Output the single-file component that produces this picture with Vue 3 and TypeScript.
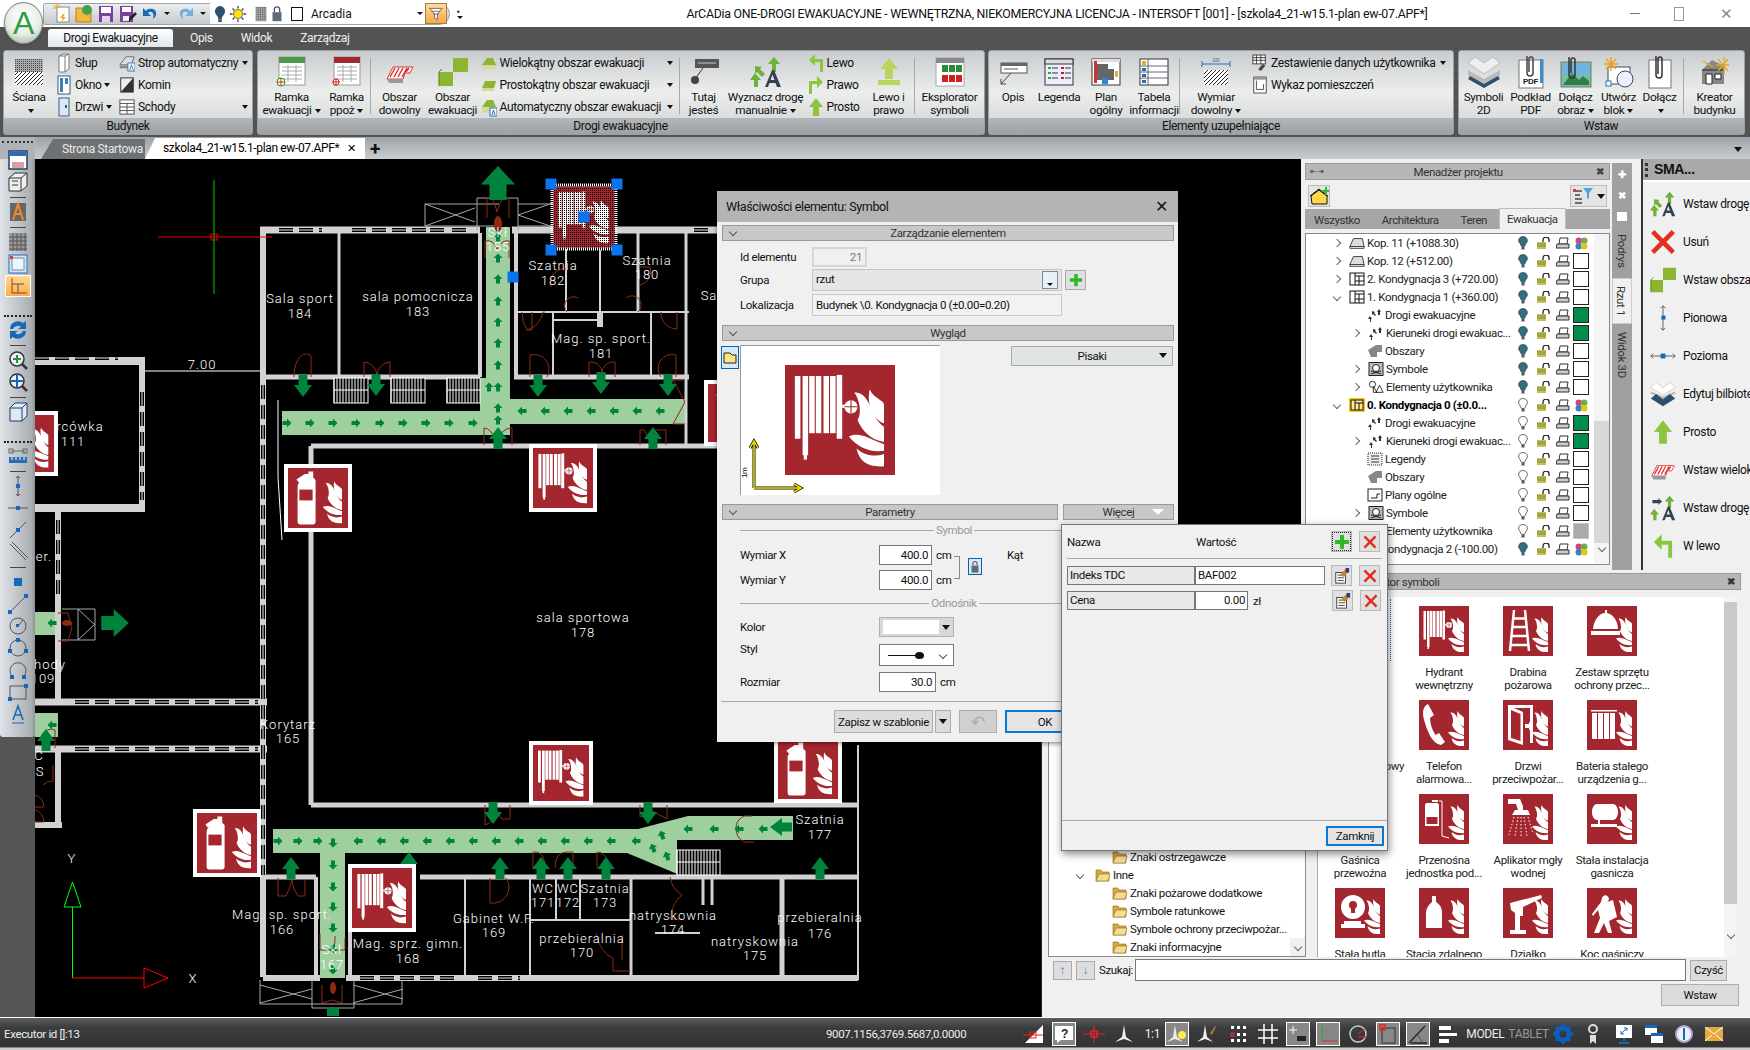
<script setup lang="ts">
interface Big { kind: 'big'; w: number; l1: string; l2?: string; dd?: boolean; icon: string; iw?: number; ih?: number }
interface Sep { kind: 'sep' }
interface Small { icon: string; text: string; dd?: boolean }
interface Col { kind: 'col'; w: number; gapEnd?: boolean; items: Small[] }
type Item = Big | Sep | Col
interface Panel { title: string; w: number; items: Item[] }

const panels: Panel[] = [
  { title: 'Budynek', w: 250, items: [
    { kind: 'big', w: 50, l1: 'Ściana', l2: '', dd: true, icon: 'wall', iw: 28, ih: 26 },
    { kind: 'col', w: 63, items: [
      { icon: 'post', text: 'Słup' }, { icon: 'window', text: 'Okno', dd: true }, { icon: 'door', text: 'Drzwi', dd: true } ] },
    { kind: 'col', w: 135, items: [
      { icon: 'slab', text: 'Strop automatyczny', dd: true }, { icon: 'chimney', text: 'Komin' }, { icon: 'stairs', text: 'Schody', dd: true } ] }
  ] },
  { title: 'Drogi ewakuacyjne', w: 728, items: [
    { kind: 'big', w: 68, l1: 'Ramka', l2: 'ewakuacji', dd: true, icon: 'frameEv', iw: 32, ih: 32 },
    { kind: 'big', w: 42, l1: 'Ramka', l2: 'ppoż', dd: true, icon: 'frameFi', iw: 32, ih: 32 },
    { kind: 'sep' },
    { kind: 'big', w: 54, l1: 'Obszar', l2: 'dowolny', icon: 'areaFree', iw: 30, ih: 30 },
    { kind: 'big', w: 52, l1: 'Obszar', l2: 'ewakuacji', icon: 'areaEv', iw: 30, ih: 30 },
    { kind: 'col', w: 198, items: [
      { icon: 'polyA', text: 'Wielokątny obszar ewakuacji', dd: true },
      { icon: 'rectA', text: 'Prostokątny obszar ewakuacji', dd: true },
      { icon: 'autoA', text: 'Automatyczny obszar ewakuacji', dd: true } ] },
    { kind: 'sep' },
    { kind: 'big', w: 44, l1: 'Tutaj', l2: 'jesteś', icon: 'here', iw: 30, ih: 30 },
    { kind: 'big', w: 80, l1: 'Wyznacz drogę', l2: 'manualnie', dd: true, icon: 'route', iw: 32, ih: 32 },
    { kind: 'col', w: 60, items: [
      { icon: 'left', text: 'Lewo' }, { icon: 'right', text: 'Prawo' }, { icon: 'straight', text: 'Prosto' } ] },
    { kind: 'big', w: 46, l1: 'Lewo i', l2: 'prawo', icon: 'both', iw: 28, ih: 30 },
    { kind: 'sep' },
    { kind: 'big', w: 66, l1: 'Eksplorator', l2: 'symboli', icon: 'explorer', iw: 32, ih: 32 }
  ] },
  { title: 'Elementy uzupełniające', w: 466, items: [
    { kind: 'big', w: 48, l1: 'Opis', l2: '', icon: 'note', iw: 30, ih: 30 },
    { kind: 'big', w: 44, l1: 'Legenda', l2: '', icon: 'legend', iw: 30, ih: 30 },
    { kind: 'big', w: 50, l1: 'Plan', l2: 'ogólny', icon: 'plan', iw: 30, ih: 30 },
    { kind: 'big', w: 46, l1: 'Tabela', l2: 'informacji', icon: 'tableI', iw: 30, ih: 30 },
    { kind: 'sep' },
    { kind: 'big', w: 68, l1: 'Wymiar', l2: 'dowolny', dd: true, icon: 'dim', iw: 30, ih: 30 },
    { kind: 'col', w: 200, items: [
      { icon: 'summary', text: 'Zestawienie danych użytkownika', dd: true }, { icon: 'rooms', text: 'Wykaz pomieszczeń' } ] }
  ] },
  { title: 'Wstaw', w: 287, items: [
    { kind: 'big', w: 50, l1: 'Symboli', l2: '2D', icon: 'sym2d', iw: 34, ih: 32 },
    { kind: 'big', w: 44, l1: 'Podkład', l2: 'PDF', icon: 'pdf', iw: 26, ih: 34 },
    { kind: 'big', w: 46, l1: 'Dołącz', l2: 'obraz', dd: true, icon: 'image', iw: 32, ih: 32 },
    { kind: 'big', w: 40, l1: 'Utwórz', l2: 'blok', dd: true, icon: 'block', iw: 34, ih: 34 },
    { kind: 'big', w: 42, l1: 'Dołącz', l2: '', dd: true, icon: 'attach', iw: 26, ih: 34 },
    { kind: 'sep' },
    { kind: 'big', w: 58, l1: 'Kreator', l2: 'budynku', icon: 'wizard', iw: 30, ih: 32 }
  ] }
]

const qatLeft = ['qNew', 'qOpen', 'qSave', 'qSaveAs']

const leftTools: { icon?: string; kind?: string }[] = [
  { icon: 'tWin' }, { icon: 'tBox' }, { kind: 'line' }, { icon: 'tA' }, { kind: 'line' }, { icon: 'tGrid' }, { icon: 'tFrame' }, { icon: 'tOrtho', kind: 'on' },
  { kind: 'grip' }, { icon: 'tSwap' }, { kind: 'line' }, { icon: 'tZoom' }, { icon: 'tZoomB' }, { kind: 'line' }, { icon: 'tCube' },
  { kind: 'grip' }, { icon: 'tRuler' }, { kind: 'line' }, { icon: 'tVert' }, { icon: 'tHoriz' }, { icon: 'tDiag' }, { icon: 'tDiag2' }, { kind: 'line' },
  { icon: 'tDot' }, { icon: 'tSeg' }, { icon: 'tCirc' }, { icon: 'tCirc2' }, { icon: 'tCirc3' }, { icon: 'tRect' }, { icon: 'tText' }
]

interface Row { chev?: 'r' | 'd'; lvl: number; icon: string; text: string; bold?: boolean; on: boolean; box: 'multi' | 'white' | 'green' | 'grey' }
const tree: Row[] = [
  { chev: 'r', lvl: 0, icon: 'nSlab', text: 'Kop. 11 (+1088.30)', on: false, box: 'multi' },
  { chev: 'r', lvl: 0, icon: 'nSlab', text: 'Kop. 12 (+512.00)', on: false, box: 'white' },
  { chev: 'r', lvl: 0, icon: 'nFloor', text: '2. Kondygnacja 3 (+720.00)', on: false, box: 'white' },
  { chev: 'd', lvl: 0, icon: 'nFloor', text: '1. Kondygnacja 1 (+360.00)', on: false, box: 'white' },
  { lvl: 1, icon: 'nRoute', text: 'Drogi ewakuacyjne', on: false, box: 'green' },
  { chev: 'r', lvl: 1, icon: 'nRoute', text: 'Kieruneki drogi ewakuac...', on: false, box: 'green' },
  { lvl: 1, icon: 'nArea', text: 'Obszary', on: false, box: 'white' },
  { chev: 'r', lvl: 1, icon: 'nSym', text: 'Symbole', on: false, box: 'white' },
  { chev: 'r', lvl: 1, icon: 'nUser', text: 'Elementy użytkownika', on: false, box: 'white' },
  { chev: 'd', lvl: 0, icon: 'nCur', text: '0. Kondygnacja 0 (±0.0...', bold: true, on: true, box: 'multi' },
  { lvl: 1, icon: 'nRoute', text: 'Drogi ewakuacyjne', on: true, box: 'green' },
  { chev: 'r', lvl: 1, icon: 'nRoute', text: 'Kieruneki drogi ewakuac...', on: true, box: 'green' },
  { lvl: 1, icon: 'nLeg', text: 'Legendy', on: true, box: 'white' },
  { lvl: 1, icon: 'nArea', text: 'Obszary', on: true, box: 'white' },
  { lvl: 1, icon: 'nPlan', text: 'Plany ogólne', on: true, box: 'white' },
  { chev: 'r', lvl: 1, icon: 'nSym', text: 'Symbole', on: true, box: 'white' },
  { chev: 'r', lvl: 1, icon: 'nUser', text: 'Elementy użytkownika', on: true, box: 'grey' },
  { chev: 'r', lvl: 0, icon: 'nFloor', text: '-1. Kondygnacja 2 (-100.00)', on: false, box: 'multi' }
]

const smaItems = [
  { icon: 'route', text: 'Wstaw drogę' }, { icon: 'xRed', text: 'Usuń' }, { icon: 'areaEv', text: 'Wstaw obszar' },
  { icon: 'pionowa', text: 'Pionowa' }, { icon: 'pozioma', text: 'Pozioma' }, { icon: 'sym2dB', text: 'Edytuj bilbiotekę' },
  { icon: 'straight', text: 'Prosto' }, { icon: 'areaFree', text: 'Wstaw wielokątny' }, { icon: 'route2', text: 'Wstaw drogę' }, { icon: 'left', text: 'W lewo' }
]

const explorerTree = [
  { lvl: 1, text: 'Znaki ostrzegawcze' }, { lvl: 0, text: 'Inne' }, { lvl: 1, text: 'Znaki pożarowe dodatkowe' },
  { lvl: 1, text: 'Symbole ratunkowe' }, { lvl: 1, text: 'Symbole ochrony przeciwpożar...' }, { lvl: 1, text: 'Znaki informacyjne' }
]

const grid = [
  { icon: '', l1: '', l2: '' }, { icon: 'sHose', l1: 'Hydrant', l2: 'wewnętrzny' }, { icon: 'sLadder', l1: 'Drabina', l2: 'pożarowa' }, { icon: 'sBell', l1: 'Zestaw sprzętu', l2: 'ochrony przec...' },
  { icon: '', l1: 'Zawór hydrantowy', l2: '' }, { icon: 'sPhone', l1: 'Telefon', l2: 'alarmowa...' }, { icon: 'sDoor', l1: 'Drzwi', l2: 'przeciwpożar...' }, { icon: 'sBattery', l1: 'Bateria stałego', l2: 'urządzenia g...' },
  { icon: '', l1: 'Gaśnica', l2: 'przewoźna', hidden: true }, { icon: 'sMobile', l1: 'Przenośna', l2: 'jednostka pod...' }, { icon: 'sMist', l1: 'Aplikator mgły', l2: 'wodnej' }, { icon: 'sTank', l1: 'Stała instalacja', l2: 'gasnicza' },
  { icon: 'sDrum', l1: 'Stała butla', l2: '' }, { icon: 'sBottle', l1: 'Stacja zdalnego', l2: '' }, { icon: 'sCannon', l1: 'Działko', l2: '' }, { icon: 'sBlanket', l1: 'Koc gaśniczy', l2: '' }
]

const statusIcons = [
  { icon: 'st1' }, { icon: 'st2', on: true }, { icon: 'st3' }, { icon: 'st4' }, { text: '1:1' }, { icon: 'st5', on: true }, { icon: 'st6' },
  { icon: 'st7' }, { icon: 'st8' }, { icon: 'st9', on: true }, { icon: 'st10', on: true }, { icon: 'st11' }, { icon: 'st12', on: true }, { icon: 'st13', on: true }, { icon: 'st14' }
]
const statusEnd = ['st15', 'st16', 'st17', 'st18', 'st19', 'st20']

// ---- drawing data (page coordinates; the svg viewBox matches them) ----
const corridors = [
  '486,227 510,227 510,399 686,399 686,424 510,424 510,435 282,435 282,411 480,411 480,378 486,378',
  '273,829 638,829 688,816 793,816 793,840 677,840 677,873 675,873 627,853 345,853 345,978 320,978 320,853 273,853',
  '35,612 58,612 58,635 35,635', '35,713 58,713 58,737 35,737'
]
const walls: number[][] = [
  [260, 230, 480, 230, 7], [512, 230, 717, 230, 7], [263, 230, 263, 977, 6], [339, 233, 339, 377, 3], [480, 233, 480, 377, 4], [516, 233, 516, 377, 4],
  [263, 377, 480, 377, 5], [514, 377, 689, 377, 5], [35, 361, 145, 361, 8], [142, 358, 142, 508, 6], [35, 508, 145, 508, 8], [58, 508, 58, 702, 6],
  [35, 702, 267, 702, 7], [35, 749, 267, 749, 7], [58, 749, 58, 825, 6], [35, 825, 62, 825, 6], [311, 446, 717, 446, 5], [311, 446, 311, 805, 5],
  [311, 805, 858, 805, 5], [858, 745, 858, 980, 2], [263, 877, 316, 877, 5], [420, 877, 858, 877, 5], [263, 978, 320, 978, 6], [346, 978, 858, 978, 6],
  [316, 877, 316, 978, 4], [350, 932, 350, 978, 4], [465, 877, 465, 978, 2], [530, 877, 530, 978, 2], [556, 877, 556, 920, 2], [580, 877, 580, 920, 2], [631, 877, 631, 978, 3],
  [530, 920, 631, 920, 2], [655, 933, 700, 933, 2], [782, 877, 782, 980, 5], [703, 877, 703, 905, 3], [712, 877, 712, 905, 3], [553, 320, 598, 320, 2], [566, 233, 566, 312, 2],
  [600, 250, 600, 312, 2], [638, 233, 638, 312, 3], [516, 312, 566, 312, 2], [566, 312, 638, 312, 2], [638, 312, 689, 312, 2], [553, 312, 553, 377, 2], [651, 312, 651, 377, 2],
  [686, 233, 686, 446, 3], [600, 312, 600, 327, 6]
]
const windows: number[][] = [
  [279, 230, 322, 230], [352, 230, 372, 230], [372, 230, 392, 230], [392, 230, 410, 230], [412, 230, 428, 230], [430, 230, 448, 230], [452, 230, 466, 230], [694, 230, 712, 230],
  [35, 358, 118, 358], [142, 392, 142, 500], [263, 385, 263, 875], [58, 520, 58, 600], [75, 702, 258, 702], [75, 749, 258, 749], [360, 978, 455, 978], [478, 978, 520, 978]
]
const stairs = [
  { x: 334, y: 378, w: 34 }, { x: 391, y: 378, w: 34 }, { x: 447, y: 378, w: 33 }, { x: 677, y: 850, w: 43 }
]
const doors = [
  'M311 356 a12 22 0 0 0 -17 21', 'M311 356 v21', 'M364 362 v15 M364 362 a14 14 0 0 1 13 15 M390 362 v15 M390 362 a14 14 0 0 0 -13 15',
  'M487 218 v-20 q6 -5 10 14 q5 -19 12 -14 v20', 'M485 258 v-17 q8 -2 12 8 q6 -10 12 -8 v17', 'M530 355 v22 M530 355 a15 15 0 0 1 17 22 M589 362 v15 M589 362 a12 12 0 0 1 13 15 M615 362 v15 M615 362 a12 12 0 0 0 -13 15 M676 355 v22 M676 355 a14 14 0 0 0 -15 22',
  'M532 312 v18 h-5 q-5 -8 -5 -18 M545 312 h-2 q-3 14 -16 18', 'M551 287 a14 14 0 0 1 15 -18', 'M640 285 a14 14 0 0 0 10 -18 h-10', 'M567 312 a9 9 0 0 1 11 -14 M638 312 a9 9 0 0 0 -12 -14',
  'M677 312 v17 a16 16 0 0 1 -16 -17', 'M484 445 v-17 q8 0 12 15 q5 -15 16 -15 v17', 'M640 445 v-15 h4 q2 2 6 13 q4 -11 6 -13 h10 v15', 'M673 380 h12 M673 424 h12 M673 380 l12 22 l-12 22',
  'M58 613 h10 q2 8 4 14 q-2 8 -4 14 h-10', 'M55 730 v18 M55 730 a8 8 0 0 0 -8 18', 'M53 765 v16 q-6 0 -10 4', 'M35 795 q8 2 9 12 h-9 M35 810 q8 2 9 12 h-9',
  'M485 805 v20 q8 -2 10 -12 M510 805 v14 h-8 q-4 -4 -8 -14', 'M640 805 v12 q6 -1 8 -8 M667 805 v14 q-8 -4 -18 -10',
  'M278 878 v18 l8 0 q4 -8 6 -16 q1 10 6 16 h7 v-16', 'M490 878 v25 a16 16 0 0 0 16 -25', 'M533 868 v-16 M533 852 q12 -2 12 16 M555 868 q0 -16 12 -16 h6 v16', 'M597 868 v-16 q10 0 12 16',
  'M596 933 q4 20 17 25 v3 M613 961 v10 h17 M622 935 v25', 'M670 877 q2 12 12 18 q-10 8 -12 24 h12', 'M320 950 v-16 M320 950 h12 q4 -6 3 -14 M345 950 v-12 M345 950 h-12', 'M322 985 v18 l10 -3 l10 3 v-18',
  'M744 842 q-8 -4 -8 -14 q0 -8 8 -12 h8 M744 842 h10'
]
const exitsGrey = [
  'M425 204 h74 M425 204 v22 h74 M425 204 l50 18 M425 226 l50 -18', 'M477 198 h41 v32 M477 198 v32 M518 204 h35 M518 226 h35 M518 215 l35 -12 M518 215 l35 12',
  'M62 609 h33 v31 h-33 M78 609 v31 M78 609 l17 16 M78 640 l17 -16', 'M260 980 v24 h142 v-24 M260 985 l52 14 M260 1003 l52 -14 M353 985 l50 14 M353 1003 l50 -14', 'M312 980 v28 h42 v-28'
]
const small = [
  ...[237, 258, 279, 301, 322, 343, 365, 387, 408, 420].map((y) => ({ x: 498, y, r: 0 })),
  ...[287, 310, 333, 356, 380, 403, 426, 449, 473].map((x) => ({ x, y: 423, r: 90 })),
  ...[522, 545, 568, 591, 614, 637, 660].map((x) => ({ x, y: 411, r: -90 })),
  ...[278, 298, 318].map((x) => ({ x, y: 841, r: 90 })),
  ...[358, 381, 404, 427, 450, 473, 496, 519, 542, 565, 588, 611, 636, 688, 714, 739, 763].map((x) => ({ x, y: x > 680 ? 829 : 841, r: -90 })),
  ...[843, 865, 887, 907, 928, 949, 970].map((y) => ({ x: 333, y, r: 180 })),
  { x: 662, y: 835, r: -20 }, { x: 653, y: 848, r: -20 }, { x: 667, y: 856, r: -20 }, { x: 52, y: 623, r: -90 }, { x: 52, y: 725, r: -90 }, { x: 489, y: 387, r: 0 }
]
const large = [
  { x: 303, y: 386, r: 180 }, { x: 376, y: 385, r: 180 }, { x: 538, y: 386, r: 180 }, { x: 601, y: 383, r: 180 }, { x: 668, y: 385, r: 180 },
  { x: 498, y: 438, r: 0 }, { x: 653, y: 438, r: 0 }, { x: 493, y: 813, r: 180 }, { x: 648, y: 813, r: 180 }, { x: 291, y: 868, r: 0 }, { x: 409, y: 863, r: 0 },
  { x: 500, y: 868, r: 0 }, { x: 541, y: 868, r: 0 }, { x: 568, y: 868, r: 0 }, { x: 606, y: 868, r: 0 }, { x: 46, y: 740, r: 0 }, { x: 781, y: 827, r: -90 }, { x: 820, y: 868, r: 0 }
]
const signs = [
  { id: 'sExt', x: 284, y: 464, s: 68 }, { id: 'sHose', x: 529, y: 444, s: 68 }, { id: 'sExt', x: -7, y: 411, s: 65 }, { id: 'sExt', x: 704, y: 380, s: 66 },
  { id: 'sHose', x: 529, y: 741, s: 64 }, { id: 'sExt', x: 193, y: 809, s: 68 }, { id: 'sHose', x: 348, y: 864, s: 68 }, { id: 'sExt', x: 774, y: 735, s: 68 }
]
const labels: [string, number, number][] = [
  ['7.00', 202, 369], ['Sala sport', 300, 303], ['184', 300, 318], ['sala pomocnicza', 418, 301], ['183', 418, 316], ['Skł', 498, 237], ['185', 498, 251],
  ['Szatnia', 553, 270], ['182', 553, 285], ['Szatnia', 647, 265], ['180', 647, 279], ['Sa', 709, 300], ['Mag. sp. sport.', 601, 343], ['181', 601, 358],
  ['rcówka', 80, 431], ['111', 73, 446], ['er.', 44, 561], ['hody', 50, 669], ['109', 43, 683], ['Korytarz', 288, 729], ['165', 288, 743], ['C', 39, 760], ['S', 40, 776],
  ['sala sportowa', 583, 622], ['178', 583, 637], ['Mag. sp. sport.', 282, 919], ['166', 282, 934], ['Mag. sprz. gimn.', 408, 948], ['168', 408, 963], ['Gabinet W.F.', 494, 923], ['169', 494, 937],
  ['WC', 543, 893], ['171', 543, 907], ['WC', 568, 893], ['172', 568, 907], ['Szatnia', 605, 893], ['173', 605, 907], ['przebieralnia', 582, 943], ['170', 582, 957],
  ['natryskownia', 673, 920], ['174', 673, 934], ['Szatnia', 820, 824], ['177', 820, 839], ['przebieralnia', 820, 922], ['176', 820, 938], ['natryskownia', 755, 946], ['175', 755, 960],
  ['Skł', 332, 954], ['167', 332, 969], ['X', 193, 983], ['Y', 72, 863]
]
const handles = [[551, 184], [617, 184], [551, 250], [617, 250], [584, 217], [513, 277]]
</script>

<template>
  <div class="app">
    <svg class="defs" width="0" height="0" aria-hidden="true">
      <defs>
        <pattern id="dith" width="2" height="2" patternUnits="userSpaceOnUse"><rect width="1" height="1" fill="#000" /></pattern>
        <pattern id="hatch" width="4" height="4" patternUnits="userSpaceOnUse"><path d="M0 4L4 0" stroke="#222" stroke-width="1" /></pattern>
        <pattern id="stip" width="2" height="2" patternUnits="userSpaceOnUse"><rect width="2" height="2" fill="#aaa" /><rect width="1" height="1" fill="#444" /></pattern>
        <g id="flames" fill="#fff">
          <path d="M77 22C80 30 90 32 90 36V53C80 50 74 36 77 22Z" />
          <path d="M63 25C72 24 76 34 80 42C82 50 88 55 90 56V70C78 68 70 60 66 50C70 44 68 32 63 25Z" />
          <path d="M58 65C68 60 78 68 90 72V78C78 80 66 75 58 65Z" />
          <path d="M65 76C72 82 80 84 90 81V92C78 93 68 90 65 76Z" />
        </g>
      </defs>
      <symbol id="sHose" viewBox="0 0 100 100"><rect width="100" height="100" fill="#a4262f" /><use href="#flames" /><g fill="#fff"><rect x="9" y="10" width="5" height="57" /><rect x="16" y="10" width="5" height="72" /><rect x="22" y="10" width="5" height="52" /><rect x="28" y="10" width="5" height="52" /><rect x="35" y="10" width="5" height="52" /><rect x="41" y="10" width="5" height="52" /><rect x="47" y="9" width="5" height="58" /><rect x="17" y="78" width="3" height="8" /><rect x="52" y="36" width="6" height="3" /></g><circle cx="60" cy="38" r="6" fill="#fff" /><path d="M54 38h12M60 32v12" stroke="#a4262f" /></symbol>
      <symbol id="sExt" viewBox="0 0 100 100"><rect width="100" height="100" fill="#a4262f" /><use href="#flames" /><path fill="#fff" d="M14 19l14-9h6v-4h8v10l4 4v70a4 4 0 0 1-4 4H20a4 4 0 0 1-4-4V32a10 10 0 0 1 7-10l-5 2z" /><rect x="19" y="36" width="22" height="18" fill="#a4262f" /></symbol>
      <symbol id="sLadder" viewBox="0 0 100 100"><rect width="100" height="100" fill="#a4262f" /><use href="#flames" /><path stroke="#fff" stroke-width="5" fill="none" d="M22 8L14 90M44 8L52 90M18 25H48M17 42H48M15 60H50M14 78H52" /></symbol>
      <symbol id="sBell" viewBox="0 0 100 100"><rect width="100" height="100" fill="#a4262f" /><use href="#flames" /><path fill="#fff" d="M12 46C14 26 26 14 36 14V8h4v6C52 16 62 30 62 46zM8 50H66V58H8z" /></symbol>
      <symbol id="sPhone" viewBox="0 0 100 100"><rect width="100" height="100" fill="#a4262f" /><use href="#flames" /><path fill="#fff" d="M18 8C6 14 6 28 12 46C20 72 30 88 44 90L52 84L40 66L33 70C26 60 22 46 22 36L30 30Z" /></symbol>
      <symbol id="sDoor" viewBox="0 0 100 100"><rect width="100" height="100" fill="#a4262f" /><use href="#flames" /><path fill="#fff" d="M10 10H60V86H54V16H22L40 24V90L10 80Z" /><path fill="#a4262f" d="M16 20L35 28V82L16 76Z" /><path fill="#fff" d="M44 48h8v-5l8 9l-8 9v-5h-8z" /></symbol>
      <symbol id="sBattery" viewBox="0 0 100 100"><rect width="100" height="100" fill="#a4262f" /><use href="#flames" /><g fill="#fff"><rect x="10" y="26" width="10" height="52" /><rect x="22" y="26" width="10" height="52" /><rect x="34" y="26" width="10" height="52" /><rect x="46" y="26" width="10" height="52" /><rect x="8" y="20" width="52" height="3" /></g></symbol>
      <symbol id="sMobile" viewBox="0 0 100 100"><rect width="100" height="100" fill="#a4262f" /><use href="#flames" /><path fill="#fff" d="M12 22a4 4 0 0 1 4-4H36a4 4 0 0 1 4 4V64H12zM26 12h12v4H26z" /><rect x="15" y="46" width="22" height="14" fill="#a4262f" /><path d="M40 14h6v70l14 4" stroke="#fff" stroke-width="2" fill="none" /></symbol>
      <symbol id="sMist" viewBox="0 0 100 100"><rect width="100" height="100" fill="#a4262f" /><use href="#flames" /><path fill="#fff" d="M10 10H34L40 24V32H50L54 42H18L24 32H30L26 20H10z" /><g stroke="#fff" stroke-width="2" stroke-dasharray="3 4"><path d="M22 46L12 82M30 46L24 84M36 46V86M42 46L48 84M50 46L60 80" /></g></symbol>
      <symbol id="sTank" viewBox="0 0 100 100"><rect width="100" height="100" fill="#a4262f" /><use href="#flames" /><path fill="#fff" d="M20 20H52C58 20 62 28 62 36S58 52 52 52H20C14 52 10 44 10 36S14 20 20 20zM8 60H60V66H8z" /><rect x="22" y="52" width="4" height="8" fill="#fff" /></symbol>
      <symbol id="sDrum" viewBox="0 0 100 100"><rect width="100" height="100" fill="#a4262f" /><use href="#flames" /><circle cx="36" cy="38" r="24" fill="#fff" /><circle cx="36" cy="34" r="8" fill="#a4262f" /><path fill="#a4262f" d="M32 34h8v16h-8z" /><path fill="#fff" d="M18 66H52V72H60V80H12V72H18z" /></symbol>
      <symbol id="sBottle" viewBox="0 0 100 100"><rect width="100" height="100" fill="#a4262f" /><use href="#flames" /><path fill="#fff" d="M26 16h8v12C44 34 46 42 46 50V80H14V50C14 42 18 34 26 28z" /></symbol>
      <symbol id="sCannon" viewBox="0 0 100 100"><rect width="100" height="100" fill="#a4262f" /><use href="#flames" /><path fill="#fff" d="M14 30L76 14L78 20L40 38V56H34V84H46V92H14V84H24V50L16 44z" /></symbol>
      <symbol id="sBlanket" viewBox="0 0 100 100"><rect width="100" height="100" fill="#a4262f" /><use href="#flames" /><path fill="#fff" d="M30 20a7 7 0 1 1 10 8L52 24L60 58L44 66L50 90H42L34 70L24 90H14L26 60L22 44L12 56L10 52L28 28z" /></symbol>

      <symbol id="wall" viewBox="0 0 28 26"><rect width="28" height="13" fill="url(#stip)" /><rect y="13" width="28" height="13" fill="#fff" /><rect y="13" width="28" height="13" fill="url(#hatch)" /></symbol>
      <symbol id="post" viewBox="0 0 16 20"><path d="M3 3l4-2h6v15l-4 3H3z" fill="#fff" stroke="#777" /><path d="M3 3h6v16M9 3l4-2" fill="none" stroke="#777" /></symbol>
      <symbol id="window" viewBox="0 0 16 20"><rect x="2" y="1" width="12" height="18" fill="#fff" stroke="#2c5f8a" /><rect x="4" y="3" width="3" height="14" fill="#3b7fb5" /><rect x="9" y="3" width="3" height="6" fill="#3b7fb5" /></symbol>
      <symbol id="door" viewBox="0 0 16 20"><rect x="3" y="1" width="10" height="18" fill="#dfe8f0" stroke="#2c5f8a" /><rect x="9" y="8" width="2" height="3" fill="#2c5f8a" /></symbol>
      <symbol id="slab" viewBox="0 0 18 20"><path d="M1 12L8 3h9l-3 9z" fill="#ddd" stroke="#666" /><rect x="1" y="13" width="9" height="3" fill="#888" /><rect x="10" y="10" width="8" height="9" fill="#fff" stroke="#2a6db5" /><path d="M12 18l2-6l2 6" stroke="#2a6db5" fill="none" /></symbol>
      <symbol id="chimney" viewBox="0 0 18 20"><rect x="2" y="2" width="14" height="16" fill="#eee" stroke="#222" /><path d="M2 18L16 2V18z" fill="#333" /></symbol>
      <symbol id="stairs" viewBox="0 0 18 20"><rect x="1" y="2" width="16" height="16" fill="#fff" stroke="#444" /><path d="M1 6h16M1 10h16M1 14h16M9 6v12" stroke="#444" /></symbol>
      <symbol id="frameEv" viewBox="0 0 32 32"><rect x="3" y="1" width="26" height="28" fill="#fff" stroke="#999" /><rect x="3" y="1" width="26" height="6" fill="#4c9a4c" /><path d="M6 11h20M6 15h20M6 19h20M6 23h20M12 9v17M20 9v17" stroke="#aaa" /><circle cx="5" cy="26" r="4" fill="#fff" stroke="#0a0" /><path d="M5 22v8M1 26h8" stroke="#d22" /></symbol>
      <symbol id="frameFi" viewBox="0 0 32 32"><rect x="3" y="1" width="26" height="28" fill="#fff" stroke="#999" /><rect x="3" y="1" width="26" height="6" fill="#a4262f" /><path d="M6 11h20M6 15h20M6 19h20M6 23h20M12 9v17M20 9v17" stroke="#aaa" /><circle cx="5" cy="26" r="3" fill="#fff" stroke="#d22" /><path d="M5 22v8M1 26h8" stroke="#d22" /></symbol>
      <symbol id="areaFree" viewBox="0 0 30 30"><path d="M2 22L8 10h20l-3 6h-5l-2 6z" fill="#fff" stroke="#d33" /><path d="M5 20l5-9M9 20l5-9M13 20l5-9M17 20l5-9M21 15l3-4" stroke="#d33" stroke-width="1.5" /><path d="M2 22h16v4H4z" fill="#999" /></symbol>
      <symbol id="areaEv" viewBox="0 0 30 30"><path d="M15 1H30V15H15V29H1V15H15z" fill="#8cb531" /><path d="M1 29V15L4 12" fill="none" stroke="#5a7a15" /></symbol>
      <symbol id="polyA" viewBox="0 0 16 16"><path d="M1 10L6 3H12L15 10z" fill="#8cb531" /><rect x="1" y="10" width="14" height="4" fill="#d7d9a2" /></symbol>
      <symbol id="rectA" viewBox="0 0 16 16"><path d="M1 11L4 4H15L13 11z" fill="#8cb531" /><rect x="1" y="11" width="12" height="3" fill="#d7d9a2" /></symbol>
      <symbol id="autoA" viewBox="0 0 16 20"><path d="M1 10L6 3H12L15 10z" fill="#8cb531" /><rect x="1" y="10" width="12" height="6" fill="#d7d9a2" /><rect x="9" y="11" width="7" height="8" fill="#fff" stroke="#2a6db5" /><path d="M11 18l1.5-5l1.5 5" stroke="#2a6db5" fill="none" /></symbol>
      <symbol id="here" viewBox="0 0 30 30"><rect x="6" y="2" width="24" height="9" fill="#555" /><path d="M9 6h18" stroke="#ccc" /><path d="M6 22L14 11" stroke="#333" /><circle cx="6" cy="23" r="4" fill="#444" /></symbol>
      <symbol id="route" viewBox="0 0 32 32"><path d="M24 1l6 7h-4v8h-4V8h-4zM5 10l7 1-2 2 5 5-3 3-5-5-2 2zM5 17l6 7H8v7H4v-7H0z" fill="#6fb23a" /><path d="M15 31L22 14h2l7 17h-4l-1.5-4h-6L18 31zm5.500-7h4l-2-5.500z" fill="#33404d" /></symbol>
      <symbol id="route2" viewBox="0 0 32 32"><path d="M24 1l6 7h-4v8h-4V8h-4zM5 17l6 7H8v7H4v-7H0z" fill="#6fb23a" /><path d="M3 6h8l-2-3 6 5-6 5 2-3H3zM15 31L22 14h2l7 17h-4l-1.500-4h-6L18 31zm5.500-7h4l-2-5.500z" fill="#33404d" /></symbol>
      <symbol id="left" viewBox="0 0 16 20"><path d="M7 1L1 7l6 6V9h5v10h3V6H7z" fill="#8cc63f" /></symbol>
      <symbol id="right" viewBox="0 0 16 20"><path d="M9 1l6 6-6 6V9H4v10H1V6h8z" fill="#8cc63f" /></symbol>
      <symbol id="straight" viewBox="0 0 16 20"><path d="M8 1l7 9h-4v9H5v-9H1z" fill="#8cc63f" /></symbol>
      <symbol id="both" viewBox="0 0 28 30"><path d="M14 1l9 11h-5v10h-8V12H5z" fill="#b9d55b" /><path d="M3 23h22v5H3z" fill="#b9d55b" /></symbol>
      <symbol id="explorer" viewBox="0 0 32 32"><rect x="2" y="2" width="28" height="28" fill="#fff" stroke="#aaa" /><rect x="2" y="2" width="28" height="5" fill="#888" /><rect x="8" y="9" width="6" height="7" fill="#2e8b3a" /><rect x="15" y="9" width="6" height="7" fill="#2e8b3a" /><rect x="22" y="9" width="6" height="7" fill="#2e8b3a" /><rect x="8" y="19" width="6" height="7" fill="#c22" /><rect x="15" y="19" width="6" height="7" fill="#c22" /><rect x="22" y="19" width="6" height="7" fill="#c22" /></symbol>
      <symbol id="note" viewBox="0 0 30 30"><rect x="3" y="6" width="26" height="10" fill="#fff" stroke="#555" /><rect x="3" y="6" width="26" height="3" fill="#666" /><path d="M6 12h14" stroke="#555" /><path d="M13 16L3 27M3 27v-5M3 27h5" stroke="#444" fill="none" /></symbol>
      <symbol id="legend" viewBox="0 0 30 30"><rect x="1" y="2" width="28" height="26" fill="#eef" stroke="#333" /><rect x="1" y="2" width="28" height="5" fill="#ddd" stroke="#333" /><path d="M4 11h3M4 16h3M4 21h3" stroke="#3a3" stroke-width="2" /><path d="M17 11h3M17 16h3M17 21h3" stroke="#b22" stroke-width="2" /><path d="M8 11h6M8 16h6M8 21h6M21 11h6M21 16h6M21 21h6" stroke="#333" /></symbol>
      <symbol id="plan" viewBox="0 0 30 30"><rect x="1" y="2" width="28" height="26" fill="#fff" stroke="#333" /><path d="M1 2h28v3H1z" fill="#ddd" /><path d="M5 7h12v5h6v11H5z" fill="#666" /><rect x="11" y="21" width="6" height="6" fill="#2a86d8" /><rect x="24" y="14" width="3" height="6" fill="#d9b13b" /><rect x="3" y="4" width="3" height="22" fill="#c33" /></symbol>
      <symbol id="tableI" viewBox="0 0 30 30"><rect x="1" y="2" width="28" height="26" fill="#fff" stroke="#333" /><path d="M1 9h28M1 15h28M1 21h28M9 2v26" stroke="#667" /><rect x="3" y="4" width="4" height="4" fill="#d9b13b" /><rect x="3" y="11" width="4" height="3" fill="#2a6db5" /><rect x="3" y="17" width="4" height="3" fill="#2a6db5" /><rect x="3" y="23" width="4" height="3" fill="#2a6db5" /></symbol>
      <symbol id="dim" viewBox="0 0 30 30"><path d="M1 7h28M1 4v6M29 4v6" stroke="#2a6db5" /><text x="11" y="5" font-size="5" fill="#2a6db5" font-family="Liberation Sans">100</text><rect x="3" y="13" width="24" height="15" fill="#fff" /><rect x="3" y="13" width="24" height="15" fill="url(#hatch)" /></symbol>
      <symbol id="summary" viewBox="0 0 18 20"><rect x="1" y="1" width="14" height="10" fill="#fff" stroke="#333" /><path d="M1 4h14M1 7h14M5 1v10M10 1v10" stroke="#333" /><path d="M7 17l5-6 3 2-5 6z" fill="#444" /></symbol>
      <symbol id="rooms" viewBox="0 0 18 20"><rect x="2" y="1" width="14" height="18" fill="#fff" stroke="#444" /><path d="M5 5v10h8v-6" stroke="#444" fill="none" /><rect x="2" y="1" width="14" height="3" fill="#999" /></symbol>
      <symbol id="sym2d" viewBox="0 0 34 32"><path d="M1 7L8 1l9 6 9-6 7 6-16 11z" fill="#eee" stroke="#bbb" /><path d="M1 14l16 9 16-9v6l-16 10L1 20z" fill="#bbb" /><path d="M3 20l14 8 14-8 2 3-16 9L1 23z" fill="#2d506f" /></symbol>
      <symbol id="sym2dB" viewBox="0 0 34 32"><path d="M1 8L8 1l9 7 9-7 7 7-16 9z" fill="#fff" stroke="#ccc" /><path d="M1 14l16 7 16-7" fill="none" stroke="#bbb" stroke-width="3" /><path d="M1 22l7-6 9 7 9-7 7 6-16 10z" fill="#2d506f" /></symbol>
      <symbol id="pdf" viewBox="0 0 26 34"><rect x="1" y="5" width="24" height="28" fill="#fff" stroke="#777" /><rect x="22" y="4" width="3" height="24" fill="#3b8ed0" /><path d="M9 1v17a3 3 0 0 0 6 0V4a2 2 0 0 0-4 0v13" fill="none" stroke="#444" stroke-width="1.500" /><text x="5" y="29" font-size="8" font-weight="700" fill="#222" font-family="Liberation Sans">PDF</text></symbol>
      <symbol id="image" viewBox="0 0 32 32"><rect x="1" y="6" width="30" height="25" fill="#7ba" stroke="#777" /><rect x="3" y="8" width="26" height="10" fill="#6fb5e4" /><path d="M3 29L12 17l7 7 4-4 6 5v4z" fill="#2f7e45" /><path d="M9 1v18a3 3 0 0 0 6 0V4a2 2 0 0 0-4 0v13" fill="none" stroke="#333" stroke-width="1.500" /></symbol>
      <symbol id="block" viewBox="0 0 34 34"><rect x="6" y="12" width="22" height="17" fill="#fff" stroke="#3a4c66" /><circle cx="23" cy="24" r="8" fill="#eef" stroke="#3a4c66" /><rect x="4" y="26" width="5" height="5" fill="#fff" stroke="#2a6db5" /><path d="M9 2v14M2 9h14M4 4l10 10M14 4L4 14" stroke="#f0a024" stroke-width="1.500" /></symbol>
      <symbol id="attach" viewBox="0 0 26 34"><rect x="2" y="5" width="22" height="28" fill="#fff" stroke="#777" /><path d="M9 1v19a3 3 0 0 0 6 0V4a2 2 0 0 0-4 0v15" fill="none" stroke="#333" stroke-width="1.500" /></symbol>
      <symbol id="wizard" viewBox="0 0 30 32"><path d="M2 14L12 4l12 6v18H2z" fill="#888" /><path d="M2 14h22M6 18h6v10H6zM15 18h6v5h-6z" stroke="#222" fill="#fff" /><path d="M3 5l10 6M24 1v18M16 9h13M18 3l10 12M28 3L18 15" stroke="#e0a820" stroke-width="1.300" /></symbol>

      <symbol id="qNew" viewBox="0 0 20 20"><rect x="5" y="3" width="12" height="15" fill="#fff" stroke="#888" /><path d="M5 4L2 1M5 4L8 1M5 4H1M5 4V0" stroke="#e8a020" /><path d="M11 10l-3 4h3l-2 4 5-5h-3l2-3z" fill="#e8a020" /></symbol>
      <symbol id="qOpen" viewBox="0 0 20 20"><path d="M2 4h6l2 3h7v11H2z" fill="#f0b93a" stroke="#b8801b" /><circle cx="13" cy="6" r="5" fill="#3fa34d" /></symbol>
      <symbol id="qSave" viewBox="0 0 20 20"><rect x="3" y="2" width="14" height="16" fill="#7d3f9e" /><rect x="5" y="3" width="10" height="6" fill="#fff" /><rect x="6" y="12" width="8" height="6" fill="#e5d5ec" /></symbol>
      <symbol id="qSaveAs" viewBox="0 0 20 20"><rect x="2" y="2" width="13" height="16" fill="#7d3f9e" /><rect x="4" y="3" width="9" height="5" fill="#fff" /><path d="M9 16l8-8 2 2-8 8z" fill="#222" /><rect x="5" y="12" width="6" height="5" fill="#eee" /></symbol>
      <symbol id="qUndo" viewBox="0 0 20 20"><path d="M3 4v8h8L8 9c3-3 7 0 5 6 6-4 3-12-4-10-2 0-3 2-3 2z" fill="#1769b8" /></symbol>
      <symbol id="qRedo" viewBox="0 0 20 20"><path d="M17 4v8H9l3-3c-3-3-7 0-5 6-6-4-3-12 4-10 2 0 3 2 3 2z" fill="#6fb0de" /></symbol>
      <symbol id="qBulb" viewBox="0 0 14 20"><path d="M7 1a6 6 0 0 1 4 10l-2 3v2H5v-2l-2-3a6 6 0 0 1 4-10z" fill="#29536e" /><rect x="5" y="16" width="4" height="3" fill="#555" /></symbol>
      <symbol id="qSun" viewBox="0 0 20 20"><circle cx="10" cy="10" r="5" fill="#ffe600" stroke="#666" /><path d="M10 1v3M10 16v3M1 10h3M16 10h3M4 4l2 2M14 14l2 2M16 4l-2 2M6 14l-2 2" stroke="#444" stroke-width="1.500" /></symbol>
      <symbol id="qDots" viewBox="0 0 14 20"><rect x="1" y="2" width="12" height="16" fill="url(#stip)" /></symbol>
      <symbol id="qLock" viewBox="0 0 14 20"><path d="M4 8V5a3 3 0 0 1 6 0v3" fill="none" stroke="#556" stroke-width="1.500" /><rect x="2" y="8" width="10" height="10" fill="#5d6b7a" /></symbol>
      <symbol id="qFilter" viewBox="0 0 20 20"><path d="M1 2h18L12 10v8l-4-2v-6z" fill="#fff" stroke="#444" /><path d="M4 6h12M6 10h8" stroke="#444" /></symbol>

      <symbol id="tWin" viewBox="0 0 22 22"><rect x="2" y="2" width="18" height="18" fill="#fff" stroke="#1e3f66" stroke-width="1.500" /><rect x="3" y="3" width="16" height="4" fill="#2a6db5" /><rect x="5" y="13" width="12" height="6" fill="#d9a0a0" /></symbol>
      <symbol id="tBox" viewBox="0 0 22 22"><path d="M2 7l6-5h12v13l-6 5H2z" fill="#eee" stroke="#333" /><path d="M2 7h12v13M14 7l6-5M5 10h6M5 14h6" stroke="#333" fill="none" /></symbol>
      <symbol id="tA" viewBox="0 0 22 22"><rect x="3" y="2" width="16" height="18" fill="#666" /><path d="M6 19L11 3l5 16M8 13h6" stroke="#f08a24" stroke-width="2" fill="none" /></symbol>
      <symbol id="tGrid" viewBox="0 0 22 22"><rect x="2" y="2" width="18" height="18" fill="#999" /><path d="M2 6h18M2 10h18M2 14h18M2 18h18M6 2v18M10 2v18M14 2v18M18 2v18" stroke="#555" /></symbol>
      <symbol id="tFrame" viewBox="0 0 22 22"><rect x="2" y="2" width="18" height="18" fill="#cfe6f6" stroke="#2a6db5" /><rect x="5" y="5" width="12" height="12" fill="#eaf5fc" stroke="#7a8c9a" /><rect x="3" y="3" width="3" height="3" fill="#e33" /></symbol>
      <symbol id="tOrtho" viewBox="0 0 22 22"><path d="M5 3v15h15" stroke="#c22" fill="none" /><path d="M5 9h12M11 9v9" stroke="#555" /></symbol>
      <symbol id="tSwap" viewBox="0 0 22 22"><path d="M3 10A8 8 0 0 1 16 4l3-2v8h-8l3-2A5 5 0 0 0 6 10zM19 12a8 8 0 0 1-13 6l-3 2v-8h8l-3 2a5 5 0 0 0 8-2z" fill="#1769b8" /></symbol>
      <symbol id="tZoom" viewBox="0 0 22 22"><circle cx="10" cy="10" r="7" fill="#eef" stroke="#333" stroke-width="1.500" /><path d="M10 6v8M6 10h8" stroke="#1c9a3a" stroke-width="2" /><path d="M15 15l5 5" stroke="#333" stroke-width="2.500" /></symbol>
      <symbol id="tZoomB" viewBox="0 0 22 22"><circle cx="10" cy="10" r="7" fill="#eef" stroke="#333" stroke-width="1.500" /><path d="M10 4v12M4 10h12" stroke="#1769b8" stroke-width="2" /><path d="M15 15l5 5" stroke="#333" stroke-width="2.500" /></symbol>
      <symbol id="tCube" viewBox="0 0 22 22"><path d="M3 7l5-5h12v13l-5 5H3z" fill="#dfeaf4" stroke="#1e3f66" /><path d="M3 7h12v13M15 7l5-5" stroke="#1e3f66" fill="none" /></symbol>
      <symbol id="tRuler" viewBox="0 0 22 22"><path d="M4 6h14" stroke="#666" /><rect x="2" y="4" width="4" height="4" fill="none" stroke="#666" /><rect x="16" y="4" width="4" height="4" fill="none" stroke="#666" /><rect x="2" y="12" width="18" height="6" fill="#2a6db5" /><path d="M5 12v3M9 12v3M13 12v3M17 12v3" stroke="#fff" /></symbol>
      <symbol id="tVert" viewBox="0 0 22 22"><path d="M11 1v20" stroke="#555" /><rect x="9" y="9" width="4" height="4" fill="#1769b8" /><path d="M9 3l2-2 2 2M9 19l2 2 2-2" stroke="#555" fill="none" /></symbol>
      <symbol id="tHoriz" viewBox="0 0 22 22"><path d="M1 11h20" stroke="#555" /><rect x="9" y="9" width="4" height="4" fill="#1769b8" /></symbol>
      <symbol id="tDiag" viewBox="0 0 22 22"><path d="M3 19L19 3" stroke="#555" /><rect x="9" y="9" width="4" height="4" fill="#1769b8" /></symbol>
      <symbol id="tDiag2" viewBox="0 0 22 22"><path d="M3 3l16 16M5 1l16 16" stroke="#555" /></symbol>
      <symbol id="tDot" viewBox="0 0 22 22"><rect x="7" y="7" width="8" height="8" fill="#1769b8" /></symbol>
      <symbol id="tSeg" viewBox="0 0 22 22"><path d="M3 19L19 3" stroke="#555" /><rect x="1" y="17" width="4" height="4" fill="#1769b8" /><rect x="17" y="1" width="4" height="4" fill="#1769b8" /></symbol>
      <symbol id="tCirc" viewBox="0 0 22 22"><circle cx="11" cy="11" r="8" fill="none" stroke="#555" /><path d="M11 11l5-6" stroke="#555" /><rect x="9" y="9" width="3" height="3" fill="#1769b8" /></symbol>
      <symbol id="tCirc2" viewBox="0 0 22 22"><circle cx="11" cy="11" r="8" fill="none" stroke="#555" /><rect x="9" y="1" width="4" height="4" fill="#1769b8" /><rect x="1" y="12" width="4" height="4" fill="#1769b8" /><rect x="17" y="12" width="4" height="4" fill="#1769b8" /></symbol>
      <symbol id="tCirc3" viewBox="0 0 22 22"><path d="M5 17a8 8 0 1 1 12 0" fill="none" stroke="#555" /><rect x="3" y="16" width="4" height="4" fill="#1769b8" /><rect x="15" y="16" width="4" height="4" fill="#1769b8" /></symbol>
      <symbol id="tRect" viewBox="0 0 22 22"><rect x="3" y="5" width="16" height="13" fill="none" stroke="#555" /><rect x="1" y="16" width="4" height="4" fill="#1769b8" /><rect x="17" y="3" width="4" height="4" fill="#1769b8" /></symbol>
      <symbol id="tText" viewBox="0 0 22 22"><path d="M6 17L11 3l5 14M8 12h6" stroke="#1769b8" stroke-width="1.500" fill="none" /><path d="M5 20h12" stroke="#1769b8" /></symbol>

      <symbol id="nSlab" viewBox="0 0 18 14"><path d="M1 11L5 2h10l2 9z" fill="#ddd" stroke="#333" /><path d="M1 11h16v2H1z" fill="#fff" stroke="#333" /></symbol>
      <symbol id="nFloor" viewBox="0 0 16 14"><rect x="1" y="1" width="14" height="12" fill="#fff" stroke="#111" /><path d="M6 1v12M6 4h9M10 4v9M10 9h5M6 9h4" stroke="#111" fill="none" /></symbol>
      <symbol id="nCur" viewBox="0 0 16 14"><rect x="0" y="0" width="16" height="14" fill="#f8c718" /><rect x="2" y="2" width="12" height="10" fill="#ffe890" stroke="#111" /><path d="M6 2v10M6 5h8M10 5v7" stroke="#111" fill="none" /></symbol>
      <symbol id="nRoute" viewBox="0 0 16 14"><path d="M12 1l2 3h-1v3h-2V4h-1zM5 3l3 1-1 1 2 2-1 1-2-2-1 1zM3 8l2 3H4v3H3v-3H1z" fill="#333" /></symbol>
      <symbol id="nArea" viewBox="0 0 16 14"><path d="M1 6L9 1h6v7h-5v5H4z" fill="#888" /></symbol>
      <symbol id="nSym" viewBox="0 0 16 14"><rect x="1" y="0.500" width="14" height="13" fill="#bbb" stroke="#222" /><circle cx="8" cy="6" r="3.500" fill="#fff" stroke="#222" /><path d="M3 12l10-3M3 9l10 3" stroke="#222" /></symbol>
      <symbol id="nUser" viewBox="0 0 18 14"><circle cx="5" cy="4" r="3.500" fill="none" stroke="#222" /><path d="M10 13L6 6 6 13z M9 13l4-8 4 8z" fill="none" stroke="#222" /></symbol>
      <symbol id="nLeg" viewBox="0 0 16 14"><rect x="1" y="1" width="14" height="12" fill="#eee" stroke="#222" stroke-dasharray="1 1" /><path d="M4 4h8M4 7h8M4 10h8" stroke="#333" /></symbol>
      <symbol id="nPlan" viewBox="0 0 16 14"><rect x="1" y="1" width="14" height="12" fill="#fff" stroke="#222" /><path d="M4 10h6V6h3" stroke="#222" fill="none" /></symbol>

      <symbol id="bulbA" viewBox="0 0 10 14"><path d="M5 .5a4 4 0 0 1 3 7l-1.500 3h-3L2 7.500a4 4 0 0 1 3-7z" fill="#336f7c" stroke="#123" stroke-width=".500" /><rect x="3.500" y="11" width="3" height="2.500" fill="#556" /></symbol>
      <symbol id="bulbB" viewBox="0 0 10 14"><circle cx="5" cy="5" r="5" fill="#ffff9a" /><path d="M5 .5a4 4 0 0 1 3 7l-1.500 3h-3L2 7.500a4 4 0 0 1 3-7z" fill="#fff" stroke="#333" stroke-width=".700" /><rect x="3.500" y="11" width="3" height="2.500" fill="#556" /></symbol>
      <symbol id="lockI" viewBox="0 0 14 12"><rect x="0" y="5" width="9" height="7" fill="#c2c05a" /><path d="M0 7h9M0 9h9" stroke="#8a8a30" /><path d="M6 5V3a3 3 0 0 1 6 0v2" fill="none" stroke="#222" stroke-width="1.300" /></symbol>
      <symbol id="printI" viewBox="0 0 14 12"><path d="M4 1h8l-1 6H3z" fill="#fff" stroke="#333" /><path d="M1 7h12v4H0z" fill="#ccc" stroke="#333" /></symbol>
      <symbol id="multi" viewBox="0 0 12 12"><circle cx="3.500" cy="3.500" r="3" fill="#d84080" /><circle cx="8.500" cy="3.500" r="3" fill="#6ab04c" /><circle cx="3.500" cy="8.500" r="3" fill="#3b7fc4" /><circle cx="8.500" cy="8.500" r="3" fill="#e8c21a" /></symbol>
      <symbol id="xRed" viewBox="0 0 24 24"><path d="M4 1l8 8 8-8 3 3-8 8 8 8-3 3-8-8-8 8-3-3 8-8-8-8z" fill="#e0301e" /></symbol>
      <symbol id="pionowa" viewBox="0 0 30 32"><path d="M15 1v30M12 4l3-3 3 3M12 28l3 3 3-3" stroke="#444" fill="none" /><rect x="13" y="13" width="5" height="5" fill="#1769b8" /></symbol>
      <symbol id="pozioma" viewBox="0 0 32 16"><path d="M1 8h30M4 5L1 8l3 3M28 5l3 3-3 3" stroke="#444" fill="none" /><rect x="13" y="5" width="6" height="6" fill="#1769b8" /></symbol>
      <symbol id="plusG" viewBox="0 0 16 16"><path d="M6 1h4v5h5v4h-5v5H6v-5H1V6h5z" fill="#2eb82e" /></symbol>
      <symbol id="clipI" viewBox="0 0 18 18"><rect x="2" y="5" width="11" height="12" fill="#fff" stroke="#333" /><path d="M4 8h7M4 11h7M4 14h7" stroke="#333" /><path d="M7 7l6-6 4 3-6 6z" fill="#c28b2c" /><rect x="13" y="0" width="4" height="5" fill="#2a3c8a" /></symbol>
      <symbol id="folder" viewBox="0 0 16 14"><path d="M1 2h5l1 2h7v9H1z" fill="#d9a93a" stroke="#8a6a20" stroke-width=".600" /><path d="M1 13l3-7h11l-2 7z" fill="#f5dc90" stroke="#8a6a20" stroke-width=".600" /></symbol>
      <symbol id="homeG" viewBox="0 0 20 18"><path d="M2 9L10 3l8 6v8H3z" fill="#ffd84a" stroke="#111" /><path d="M1 9l9-7 9 7" stroke="#111" fill="none" /><path d="M13 3h3V0h2v3h2v2h-2v3h-2V5h-3z" fill="#2eb82e" /></symbol>
      <symbol id="filterTree" viewBox="0 0 22 18"><path d="M2 4h7M2 8h5M2 12h7M2 16h7" stroke="#444" stroke-width="1.500" /><path d="M10 1h10l-4 5v6l-2-1V6z" fill="#4aa4e0" /><rect x="0" y="2" width="3" height="3" fill="#e33" /></symbol>

      <symbol id="st1" viewBox="0 0 22 22"><path d="M2 20L20 2V20z" fill="#fff" /><path d="M0 12h20" stroke="#e22" /><rect x="7" y="9" width="6" height="6" fill="none" stroke="#e22" /></symbol>
      <symbol id="st2" viewBox="0 0 22 22"><path d="M2 3h18v14H8l-4 3v-3H2z" fill="#fff" /><text x="8" y="15" font-size="12" font-family="Liberation Sans" font-weight="700" fill="#222">?</text></symbol>
      <symbol id="st3" viewBox="0 0 22 22"><path d="M0 11h22M11 2v18" stroke="#e22" /><rect x="8" y="8" width="6" height="6" fill="none" stroke="#e22" stroke-width="1.500" /></symbol>
      <symbol id="st4" viewBox="0 0 22 22"><path d="M11 2l2 12 7 5-9-3-9 3 7-5z" fill="#eee" /></symbol>
      <symbol id="st5" viewBox="0 0 22 22"><path d="M9 2l2 12 6 5-8-3-8 3 6-5z" fill="#eee" /><circle cx="16" cy="12" r="4" fill="#ffe94a" /></symbol>
      <symbol id="st6" viewBox="0 0 22 22"><path d="M9 2l2 12 6 5-8-3-8 3 6-5z" fill="#eee" /><path d="M14 10l5-7 1 1-4 8z" fill="#a07a3a" /></symbol>
      <symbol id="st7" viewBox="0 0 22 22"><g fill="#fff"><rect x="4" y="3" width="3" height="3" /><rect x="10" y="3" width="3" height="3" /><rect x="16" y="3" width="3" height="3" /><rect x="10" y="10" width="3" height="3" /><rect x="16" y="10" width="3" height="3" /><rect x="10" y="16" width="3" height="3" /><rect x="16" y="16" width="3" height="3" /></g><rect x="4" y="10" width="3" height="3" fill="none" stroke="#e33" /><rect x="4" y="16" width="3" height="3" fill="#fff" /></symbol>
      <symbol id="st8" viewBox="0 0 22 22"><path d="M7 1v20M15 1v20M1 7h20M1 15h20" stroke="#fff" stroke-width="1.500" /></symbol>
      <symbol id="st9" viewBox="0 0 22 22"><path d="M6 3v8M2 7h8" stroke="#fff" /><rect x="10" y="13" width="9" height="5" fill="#222" /></symbol>
      <symbol id="st10" viewBox="0 0 22 22"><path d="M5 3v15" stroke="#2a2" /><path d="M5 18h15" stroke="#e22" /><rect x="9" y="5" width="9" height="9" fill="none" stroke="#777" stroke-dasharray="1 2" /></symbol>
      <symbol id="st11" viewBox="0 0 22 22"><circle cx="11" cy="11" r="8" fill="none" stroke="#ccc" stroke-width="1.500" /><path d="M11 11l8-6M11 14h8" stroke="#e22" /></symbol>
      <symbol id="st12" viewBox="0 0 22 22"><rect x="5" y="5" width="13" height="15" fill="none" stroke="#333" /><rect x="3" y="2" width="5" height="5" fill="none" stroke="#e22" stroke-width="1.500" /></symbol>
      <symbol id="st13" viewBox="0 0 22 22"><path d="M2 20L18 3M4 20h16" stroke="#222" stroke-width="1.300" /><path d="M11 12l5 8" stroke="#555" /></symbol>
      <symbol id="st14" viewBox="0 0 22 22"><rect x="2" y="3" width="12" height="4" fill="#fff" /><rect x="2" y="10" width="18" height="3" fill="#fff" /><rect x="2" y="16" width="10" height="4" fill="#fff" /></symbol>
      <symbol id="st15" viewBox="0 0 22 22"><circle cx="11" cy="11" r="6" fill="none" stroke="#0f5cc0" stroke-width="5" /><path d="M11 1v4M11 17v4M1 11h4M17 11h4M4 4l3 3M15 15l3 3M18 4l-3 3M7 15l-3 3" stroke="#0f5cc0" stroke-width="3" /></symbol>
      <symbol id="st16" viewBox="0 0 22 22"><circle cx="11" cy="6" r="4" fill="none" stroke="#ddd" stroke-width="2" /><path d="M8 12h6v9l-3-3-3 3z" fill="#ddd" /></symbol>
      <symbol id="st17" viewBox="0 0 22 22"><rect x="3" y="2" width="16" height="13" fill="#fff" /><path d="M8 11l6-6M11 5h3v3M8 8v3h3" stroke="#1769b8" fill="none" /><path d="M11 15v3M6 20h10" stroke="#1769b8" stroke-width="2" /></symbol>
      <symbol id="st18" viewBox="0 0 22 22"><rect x="2" y="2" width="12" height="10" fill="#fff" /><rect x="2" y="2" width="12" height="3" fill="#1769b8" /><rect x="8" y="10" width="12" height="10" fill="#fff" /><rect x="8" y="10" width="12" height="3" fill="#1769b8" /></symbol>
      <symbol id="st19" viewBox="0 0 22 22"><circle cx="11" cy="11" r="8" fill="#eef" stroke="#aac" stroke-width="2" /><path d="M11 5v12" stroke="#1769b8" stroke-width="2" /></symbol>
      <symbol id="st20" viewBox="0 0 22 22"><rect x="2" y="4" width="18" height="14" fill="#e5a93e" /><path d="M2 4l9 7 9-7M2 18l7-6M20 18l-7-6" stroke="#fff" fill="none" /></symbol>
      <path id="arrS" d="M0 -4.500L4.500 0H2V4.500H-2V0H-4.500Z" fill="#00843d" />
      <path id="arrL" d="M0 -11L9 1H4.500V11H-4.500V1H-9Z" fill="#00843d" />
    </svg>

    <header class="titlebar">
      <div class="logo"><span>A</span></div>
      <div class="qat">
        <svg v-for="q in qatLeft" :key="q" class="qi"><use :href="'#' + q" /></svg>
        <svg class="qi"><use href="#qUndo" /></svg><span class="dd dark" />
        <svg class="qi q2"><use href="#qRedo" /></svg><span class="dd dark" />
        <div class="layer">
          <svg class="li"><use href="#qBulb" /></svg>
          <svg class="li sun"><use href="#qSun" /></svg>
          <svg class="li"><use href="#qDots" /></svg>
          <svg class="li"><use href="#qLock" /></svg>
          <span class="sw" />
          <span class="layer-name">Arcadia</span>
          <span class="dd dark" />
        </div>
        <div class="qfilter"><svg class="li"><use href="#qFilter" /></svg></div>
      </div>
      <span class="qat-more">▪<br /><i class="dd dark" /></span>
      <div class="wintitle">ArCADia ONE-DROGI EWAKUACYJNE - WEWNĘTRZNA, NIEKOMERCYJNA LICENCJA - INTERSOFT [001] - [szkola4_21-w15.1-plan ew-07.APF*]</div>
      <div class="winctl">
        <span class="min" /><span class="max" /><span class="cls">✕</span>
      </div>
    </header>

    <nav class="rtabs">
      <span class="rtab active">Drogi Ewakuacyjne</span>
      <span class="rtab">Opis</span>
      <span class="rtab">Widok</span>
      <span class="rtab">Zarządzaj</span>
    </nav>

    <section class="ribbon">
      <div v-for="p in panels" :key="p.title" class="rpanel" :style="{ width: p.w + 'px' }">
        <div class="rbody">
          <template v-for="(it, i) in p.items" :key="i">
            <span v-if="it.kind === 'sep'" class="rsep" />
            <div v-else-if="it.kind === 'big'" class="big" :style="{ width: it.w + 'px' }">
              <span class="bigicon"><svg :width="it.iw" :height="it.ih"><use :href="'#' + it.icon" /></svg></span>
              <span class="bl">{{ it.l1 }}</span>
              <span class="bl">{{ it.l2 }}<i v-if="it.dd" class="dd dark tiny" /></span>
            </div>
            <div v-else class="scol" :style="{ width: it.w + 'px' }">
              <div v-for="s in it.items" :key="s.text" class="srow">
                <svg class="si"><use :href="'#' + s.icon" /></svg>
                <span class="st">{{ s.text }}</span>
                <i v-if="s.dd" class="dd dark tiny" :class="{ endd: it.w > 100 }" />
              </div>
            </div>
          </template>
        </div>
        <div class="rtitle">{{ p.title }}</div>
      </div>
    </section>

    <div class="doctabs">
      <div class="dgrip"><span class="dots" /></div>
      <span class="dtab">Strona Startowa</span>
      <span class="dtab cur">szkola4_21-w15.1-plan ew-07.APF*<b>✕</b></span>
      <span class="dplus">+</span>
      <span class="dmenu"><i class="dd dark" /></span>
    </div>

    <main class="main">
      <aside class="ltools">
        <template v-for="(t, i) in leftTools" :key="i">
          <span v-if="t.kind === 'line'" class="tline" />
          <span v-else-if="t.kind === 'grip'" class="tgrip" />
          <span v-else class="tbtn" :class="{ on: t.kind === 'on' }"><svg width="22" height="22"><use :href="'#' + t.icon" /></svg></span>
        </template>
      </aside>

      <div class="canvas">
        <svg class="plan" width="1266" height="858" viewBox="35 159 1266 858">
          <polygon v-for="(c, i) in corridors" :key="'c' + i" :points="c" fill="#9fcf9f" />
          <line v-for="(w, i) in walls" :key="'w' + i" :x1="w[0]" :y1="w[1]" :x2="w[2]" :y2="w[3]" stroke="#d2d2d2" :stroke-width="w[4]" />
          <line v-for="(w, i) in windows" :key="'n' + i" :x1="w[0]" :y1="w[1]" :x2="w[2]" :y2="w[3]" stroke="#000" stroke-width="4" stroke-dasharray="14 6" />
          <line v-for="(w, i) in windows" :key="'m' + i" :x1="w[0]" :y1="w[1]" :x2="w[2]" :y2="w[3]" stroke="#eee" stroke-width="1" stroke-dasharray="14 6" />
          <line x1="145" y1="371" x2="260" y2="371" stroke="#fff" />
          <path d="M278 477L282 540M278 477V400" stroke="#fff" fill="none" />
          <g v-for="(st, i) in stairs" :key="'s' + i">
            <rect :x="st.x" :y="st.y" :width="st.w" height="25" fill="#000" stroke="#fff" />
            <path :d="Array.from({ length: Math.floor(st.w / 3) }, (_, k) => `M${st.x + k * 3} ${st.y}v25`).join('')" stroke="#fff" />
            <path :d="`M${st.x} ${st.y + 12}h${st.w}`" stroke="#fff" />
          </g>
          <path v-for="(e, i) in exitsGrey" :key="'e' + i" :d="e" stroke="#a8a8a8" fill="none" />
          <path v-for="(d, i) in doors" :key="'d' + i" :d="d" stroke="#8f2a12" stroke-width="1" fill="none" />
          <use v-for="(a, i) in small" :key="'a' + i" href="#arrS" :transform="`translate(${a.x} ${a.y}) rotate(${a.r})`" />
          <use v-for="(a, i) in large" :key="'l' + i" href="#arrL" :transform="`translate(${a.x} ${a.y}) rotate(${a.r})`" />
          <use href="#arrL" transform="translate(498 183) scale(1.900 1.550)" />
          <use href="#arrL" transform="translate(115 623) rotate(90) scale(1.550 1.250)" />
          <rect x="327" y="1008" width="12" height="8" fill="#00843d" />
          <ellipse cx="498" cy="224" rx="4" ry="8" fill="#8f2a12" />
          <ellipse cx="333" cy="988" rx="3" ry="6" fill="#8f2a12" />
          <ellipse cx="67" cy="623" rx="5" ry="3" fill="#8f2a12" />
          <g v-for="(s, i) in signs" :key="'g' + i">
            <rect :x="s.x" :y="s.y" :width="s.s" :height="s.s" fill="#fff" />
            <use :href="'#' + s.id" :x="s.x + 4" :y="s.y + 4" :width="s.s - 8" :height="s.s - 8" />
          </g>
          <use href="#sHose" x="553" y="186" width="62" height="62" />
          <rect x="552" y="185" width="64" height="64" fill="url(#dith)" />
          <rect x="552" y="185" width="64" height="64" fill="none" stroke="#fff" stroke-width="3" stroke-dasharray="1 1" />
          <g class="cad">
            <text v-for="(t, i) in labels" :key="'t' + i" :x="t[1]" :y="t[2]" text-anchor="middle">{{ t[0] }}</text>
          </g>
          <path d="M214 180V294" stroke="#0c0" /><path d="M158 237H272" stroke="#e00" />
          <rect x="211" y="234" width="6" height="6" fill="none" stroke="#e00" />
          <path d="M72.500 978V907M72.500 882L64 907H81Z" stroke="#0f0" fill="none" />
          <path d="M72 978H144M144 968V988L168 978Z" stroke="#f00" fill="none" />
          <rect v-for="(h, i) in handles" :key="'h' + i" :x="h[0] - 5.500" :y="h[1] - 5.500" width="11" height="11" fill="#0a73ee" />
        </svg>
      </div>

      <div class="right">
        <div class="rtop">
          <section class="pm">
            <div class="phead"><span class="pin">⇤⇥</span><span class="ptitle">Menadżer projektu</span><b class="px">✖</b></div>
            <div class="ptools">
              <span class="tbtn2"><svg width="20" height="18"><use href="#homeG" /></svg></span>
              <span class="tbtn2 wide"><svg width="22" height="18"><use href="#filterTree" /></svg><i class="dd dark" /></span>
            </div>
            <div class="pmtabs">
              <span>Wszystko</span><span>Architektura</span><span>Teren</span><span class="act">Ewakuacja</span>
            </div>
            <div class="treebox">
              <div class="rows">
                <div v-for="(r, i) in tree" :key="i" class="trow" :class="{ lv1: r.lvl === 1, bold: r.bold }">
                  <i class="chev" :class="r.chev" />
                  <svg class="nic"><use :href="'#' + r.icon" /></svg>
                  <span class="tt">{{ r.text }}</span>
                  <svg class="cbulb"><use :href="r.on ? '#bulbB' : '#bulbA'" /></svg>
                  <svg class="clock"><use href="#lockI" /></svg>
                  <svg class="cprint"><use href="#printI" /></svg>
                  <svg v-if="r.box === 'multi'" class="cbox m"><use href="#multi" /></svg>
                  <span v-else class="cbox" :class="r.box" />
                </div>
              </div>
              <div class="vscroll"><i class="chev up" /><span class="thumb" /><i class="chev d" /></div>
            </div>
          </section>
          <div class="vtabs">
            <b>✚</b><b class="s2">✖</b><span class="mini" />
            <span class="vt">Podrys</span><span class="vt act">Rzut 1</span><span class="vt">Widok 3D</span>
          </div>
          <section class="sma">
            <div class="smahead"><i class="smagrip" />SMA...</div>
            <div class="smalist">
              <div v-for="(s, i) in smaItems" :key="i" class="smarow">
                <span class="smaic"><svg width="26" height="26"><use :href="'#' + s.icon" /></svg></span>
                <span class="smat">{{ s.text }}</span>
              </div>
            </div>
          </section>
        </div>
      </div>

      <section class="explorer">
        <div class="xhead"><span>Eksplorator symboli</span><b>✖</b></div>
        <div class="xbody">
          <div class="xtree">
            <div class="xrows">
              <div v-for="t in explorerTree" :key="t.text" class="xrow" :class="{ x1: t.lvl === 1 }">
                <i v-if="t.lvl === 0" class="chev d" />
                <svg class="xf"><use href="#folder" /></svg>
                <span>{{ t.text }}</span>
              </div>
            </div>
            <div class="xscroll"><i class="chev d" /></div>
          </div>
          <div class="xgrid">
            <div class="cells">
              <div v-for="(g, i) in grid" :key="i" class="cell">
                <svg v-if="g.icon" class="sign"><use :href="'#' + g.icon" /></svg>
                <span v-else class="nosign" />
                <span>{{ g.l1 }}</span><span>{{ g.l2 }}</span>
              </div>
            </div>
            <div class="gscroll"><i class="chev up" /><span class="gthumb" /><i class="chev d" /></div>
          </div>
        </div>
        <div class="xsearch">
          <span class="xb"><i class="ab">↑</i></span><span class="xb"><i class="ab">↓</i></span>
          <span class="xl">Szukaj:</span><span class="xinp" /><span class="btn czysc">Czyść</span>
        </div>
        <div class="xfoot"><span class="btn wstaw">Wstaw</span></div>
      </section>
    </main>

    <footer class="status">
      <span class="exec">Executor id []:13</span>
      <span class="coords">9007.1156,3769.5687,0.0000</span>
      <div class="sicons">
        <span v-for="(s, i) in statusIcons" :key="i" class="sti" :class="{ on: s.on, tx: s.text }">
          <template v-if="s.text">{{ s.text }}</template>
          <svg v-else width="22" height="22"><use :href="'#' + s.icon" /></svg>
        </span>
        <span class="stx">MODEL</span><span class="stx dim">TABLET</span>
        <span v-for="s in statusEnd" :key="s" class="sti"><svg width="22" height="22"><use :href="'#' + s" /></svg></span>
      </div>
    </footer>

    <!-- floating dialogs -->
    <div class="dlg one">
      <div class="dtitle"><span>Właściwości elementu: Symbol</span><span class="dx">✕</span></div>
      <div class="dbody">
        <div class="sect"><i class="chev d" /><span>Zarządzanie elementem</span></div>
        <div class="frow r1"><label>Id elementu</label><span class="inp dis num w55">21</span></div>
        <div class="frow r2"><label>Grupa</label><span class="inp grey w250"><em>rzut</em><span class="gbtn"><i class="dd dark" /></span></span><span class="plusb"><svg width="14" height="14"><use href="#plusG" /></svg></span></div>
        <div class="frow r3"><label>Lokalizacja</label><span class="inp light w250">Budynek \0. Kondygnacja 0 (±0.00=0.20)</span></div>
        <div class="sect s2"><i class="chev d" /><span>Wygląd</span></div>
        <div class="look">
          <span class="fold"><svg width="14" height="12"><path d="M1 1h6l2 2h4v8H1z" fill="#ffe680" stroke="#222" /></svg></span>
          <div class="prev">
            <svg class="prevsign"><use href="#sHose" /></svg>
            <svg class="axis" width="70" height="60" viewBox="0 0 70 60"><path d="M5 50V5M5 50H50M1 10L5 3l4 7M45 46l7 4-7 4" stroke="#111" stroke-width="3" fill="none" /><path d="M5 50V5M5 50H50M1 10L5 3l4 7M45 46l7 4-7 4" stroke="#f0e000" stroke-width="1.500" fill="none" /><text x="-40" y="-2" transform="rotate(-90)" font-size="8" font-family="Liberation Sans">1m</text></svg>
          </div>
          <span class="pisaki">Pisaki<i class="dd dark" /></span>
        </div>
        <div class="prow">
          <div class="sect pp"><i class="chev d" /><span>Parametry</span></div>
          <div class="sect wi"><span>Więcej</span><i class="dd white" /></div>
        </div>
        <div class="legend l1"><span>Symbol</span></div>
        <div class="symrow">
          <div class="symcol">
            <div class="frow f1"><label class="lw">Wymiar X</label><span class="inp num w53">400.0</span><span class="unit">cm</span></div>
            <div class="frow f2"><label class="lw">Wymiar Y</label><span class="inp num w53">400.0</span><span class="unit">cm</span></div>
          </div>
          <span class="bracket" />
          <span class="lockb"><svg width="10" height="14"><use href="#qLock" /></svg></span>
          <span class="kat">Kąt</span>
        </div>
        <div class="legend l2"><span>Odnośnik</span></div>
        <div class="frow f3"><label class="lw">Kolor</label><span class="combo grey"><span class="cwhite" /><i class="dd dark" /></span></div>
        <div class="frow f4"><label class="lw up">Styl</label><span class="combo"><span class="styl"><i /></span><span class="vchev" /></span></div>
        <div class="frow f5"><label class="lw">Rozmiar</label><span class="inp num w57">30.0</span><span class="unit">cm</span></div>
      </div>
      <div class="dfoot">
        <span class="btn z">Zapisz w szablonie</span>
        <span class="btn za"><i class="dd dark" /></span>
        <span class="btn und">↶</span>
        <span class="btn okb">OK</span>
      </div>
    </div>

    <div class="dlg two">
      <div class="d2head">
        <span class="n1">Nazwa</span><span class="n2">Wartość</span>
        <span class="ibtn dotted"><svg width="16" height="16"><use href="#plusG" /></svg></span>
        <span class="ibtn"><svg width="14" height="14"><use href="#xRed" /></svg></span>
      </div>
      <div class="d2row first">
        <span class="cellk">Indeks TDC</span><span class="cellv">BAF002</span>
        <span class="ibtn"><svg width="16" height="16"><use href="#clipI" /></svg></span>
        <span class="ibtn"><svg width="14" height="14"><use href="#xRed" /></svg></span>
      </div>
      <div class="d2row">
        <span class="cellk">Cena</span><span class="cellv num">0.00</span><span class="zl">zł</span>
        <span class="ibtn"><svg width="16" height="16"><use href="#clipI" /></svg></span>
        <span class="ibtn"><svg width="14" height="14"><use href="#xRed" /></svg></span>
      </div>
      <div class="d2foot"><span class="btn okb zam">Zamknij</span></div>
    </div>
  </div>
</template>

<style scoped>
.app { position: relative; width: 1750px; height: 1050px; overflow: hidden; display: flex; flex-direction: column; background: #555; font-family: Roboto, "Liberation Sans", sans-serif; font-size: 11.500px; color: #111; letter-spacing: -0.35px; }
.defs { position: absolute; }
svg { display: block; flex: none; }
i, em, b { font-style: normal; }

.dd { display: inline-block; width: 0; height: 0; border-left: 4px solid transparent; border-right: 4px solid transparent; border-top: 5px solid #111; }
.dd.tiny { border-width: 4px 3px 0; margin-left: 3px; vertical-align: 1px; }
.dd.white { border-top-color: #fff; border-left-width: 6px; border-right-width: 6px; border-top-width: 6px; }
.endd { margin-left: auto !important; margin-right: 4px; }

.titlebar { height: 27px; background: #fff; display: flex; align-items: center; flex: none; }
.logo { position: absolute; left: 4px; top: 2px; width: 37px; height: 40px; border-radius: 50%; background: radial-gradient(circle at 50% 35%, #fff 0, #e6eee4 55%, #9aa69b 100%); border: 1px solid #7f8a80; z-index: 3; display: flex; align-items: center; justify-content: center; box-shadow: 0 1px 2px #3337; }
.logo span { font: 400 32px "Liberation Sans", sans-serif; color: #2c9c45; }
.qat { margin-left: 43px; width: 407px; height: 22px; display: flex; align-items: center; background: linear-gradient(#eceeef, #c6cacd); border: 1px solid #9ea3a7; border-radius: 2px 12px 12px 2px; padding-left: 8px; box-sizing: border-box; }
.qi { width: 20px; height: 20px; margin-right: 2px; }
.q2 { margin-left: 4px; }
.qat .dd { border-width: 3px 3px 0; margin: 0 2px; }
.layer { margin-left: 2px; width: 215px; height: 21px; background: #fff; display: flex; align-items: center; padding-left: 2px; box-sizing: border-box; }
.li { width: 14px; height: 18px; margin: 0 1px; }
.sun { width: 18px; }
.layer .li:nth-child(3) { margin-left: 6px; }
.sw { width: 10px; height: 12px; border: 1px solid #111; margin-left: 6px; }
.layer-name { margin-left: 8px; flex: 1; font-size: 12px; letter-spacing: 0; }
.qfilter { width: 22px; height: 21px; background: linear-gradient(#ffd9a0, #f5a94a); border: 1px solid #a87c3a; box-sizing: border-box; display: flex; align-items: center; justify-content: center; }
.qat-more { margin-left: 7px; width: 9px; line-height: 5px; font-size: 8px; }
.qat-more .dd { border-width: 3px 3px 0; }
.wintitle { flex: 1; text-align: center; padding-left: 40px; font-size: 12.350px; white-space: nowrap; color: #111; letter-spacing: -0.27px; }
.winctl { width: 142px; flex: none; display: flex; align-items: center; position: relative; height: 27px; }
.min { width: 10px; height: 1px; background: #777; margin-left: 22px; }
.max { width: 10px; height: 14px; border: 1px solid #999; margin-left: 34px; box-sizing: border-box; }
.cls { margin-left: 36px; color: #888; font-size: 15px; }

.rtabs { height: 20px; background: #535353; display: flex; align-items: flex-end; padding-left: 48px; flex: none; color: #f0f0f0; font-size: 12px; }
.rtab { padding: 0 14px; line-height: 18px; margin-right: 0; }
.rtab.active { width: 125px; box-sizing: border-box; text-align: center; padding: 0; color: #111; background: linear-gradient(#fff, #dfe6ea); border-radius: 3px 3px 0 0; margin-right: 3px; }

.ribbon { height: 90px; background: #535353; display: flex; gap: 3.500px; padding: 3px 0 0 3px; box-sizing: border-box; flex: none; }
.rpanel { height: 85px; display: flex; flex-direction: column; border-radius: 3px; border: 1px solid #9aa0a4; box-sizing: border-box; background: linear-gradient(#c9ccd0, #eceeec 50%, #cfd2d4); overflow: hidden; }
.rbody { flex: 1; display: flex; padding-top: 1px; }
.rtitle { height: 16px; line-height: 16px; text-align: center; background: linear-gradient(#b3b6b8, #9fa2a4); font-size: 12px; }
.rsep { width: 1px; height: 56px; background: #a5a9ac; margin: 6px 2px 0; flex: none; }
.big { flex: none; display: flex; flex-direction: column; align-items: center; font-size: 11.800px; }
.bigicon { height: 39px; display: flex; align-items: center; justify-content: center; }
.bl { height: 13px; line-height: 13px; white-space: nowrap; }
.scol { flex: none; display: flex; flex-direction: column; padding-left: 2px; box-sizing: border-box; }
.srow { height: 22px; display: flex; align-items: center; white-space: nowrap; font-size: 12px; }
.si { width: 16px; height: 20px; margin-right: 3px; }
.st { display: block; }

.doctabs { height: 22px; background: linear-gradient(#9ea3a8, #c9cdd1); display: flex; align-items: flex-end; flex: none; font-size: 12px; }
.dgrip { width: 35px; height: 22px; background: #aeb3b8; }
.dots { display: block; margin: 4px 2px 0; height: 2px; border-top: 2px dotted #333; }
.dtab { margin-left: 6px; padding: 0 0 0 21px; width: 104px; line-height: 20px; background: #6e7174; color: #e8e8e8; clip-path: polygon(12px 0, 100% 0, 100% 100%, 0 100%); box-sizing: border-box; white-space: nowrap; overflow: hidden; }
.dtab.cur { margin-left: 0; width: 220px; background: #fff; color: #000; padding: 0 0 0 18px; position: relative; clip-path: polygon(10px 0, 100% 0, 100% 100%, 0 100%); }
.dtab.cur b { margin-left: 8px; font-weight: 400; font-size: 11px; }
.dplus { margin-left: 5px; font-size: 19px; font-weight: 700; line-height: 20px; }
.dmenu { margin-left: auto; margin-right: 8px; align-self: center; }

.main { position: relative; height: 858px; display: flex; flex: none; }
.ltools { width: 35px; height: 578px; flex: none; background: linear-gradient(90deg, #dfe3e7, #a9aeb3 90%, #8e9398); border-radius: 0 0 3px 3px; display: flex; flex-direction: column; align-items: center; box-sizing: border-box; }
.tbtn { width: 26px; height: 22px; display: flex; align-items: center; justify-content: center; flex: none; }
.tbtn:first-child { margin-top: -10px; }
.tbtn.on { background: linear-gradient(#ffd98e, #f6b04a); border: 1px solid #fff; box-sizing: border-box; }
.tline { width: 16px; height: 1px; background: #444; margin: 4px 0 3px; flex: none; }
.tgrip { width: 28px; height: 0; border-top: 2px dotted #222; margin: 18px 0 2px; flex: none; }
.canvas { width: 1266px; background: #000; flex: none; overflow: hidden; }
.plan { display: block; }
.cad text { font: 300 13px Roboto, "Liberation Sans", sans-serif; fill: #fff; letter-spacing: 1px; }

.right { width: 449px; background: #f0f0f0; flex: none; }
.rtop { height: 411px; display: flex; background: #f0f0f0; overflow: hidden; }
.pm { width: 311px; flex: none; padding: 4px 2px 0 4px; box-sizing: border-box; }
.phead { height: 15px; background: #b7b7b7; border: 1px solid #999; display: flex; align-items: center; box-sizing: content-box; position: relative; color: #333; }
.pin { width: 22px; margin-left: 4px; font-size: 8px; color: #444; }
.ptitle { flex: 1; text-align: center; padding-right: 12px; }
.px { margin-right: 5px; font-size: 10px; color: #444; }
.ptools { height: 20px; margin-top: 5px; display: flex; justify-content: space-between; padding: 0 3px 0 3px; }
.tbtn2 { width: 20px; height: 20px; background: #e4e4e4; border: 1px solid #bbb; display: flex; align-items: center; justify-content: center; }
.tbtn2.wide { width: 35px; gap: 2px; }
.pmtabs { height: 20px; margin-top: 4px; background: #a6a6a6; display: flex; align-items: flex-end; padding-left: 9px; color: #333; font-size: 11.500px; letter-spacing: -0.45px; }
.pmtabs span { margin-right: 22px; line-height: 18px; }
.pmtabs .act { background: #f0f0f0; line-height: 20px; padding: 0 7px; border: 1px solid #bbb; border-bottom: 0; margin-left: -10px; margin-right: 0; }
.treebox { height: 332px; margin-top: 4px; background: #fff; border: 1px solid #888; box-sizing: border-box; display: flex; overflow: hidden; }
.rows { width: 288px; flex: none; }
.trow { height: 18px; display: flex; align-items: center; position: relative; padding-left: 28px; color: #222; white-space: nowrap; }
.trow.lv1 { padding-left: 47px; }
.trow.bold { font-weight: 700; color: #000; }
.chev { width: 5px; height: 5px; border-right: 1.500px solid #666; border-bottom: 1.500px solid #666; flex: none; display: block; box-sizing: content-box; }
.chev.r { transform: rotate(-45deg); }
.chev.d { transform: rotate(45deg); }
.chev.up { transform: rotate(225deg); }
.trow .chev { margin-right: 9px; }
.trow > i:not(.r):not(.d) { border: 0; }
.nic { width: 16px; height: 14px; margin-right: 2px; }
.tt { width: 150px; overflow: hidden; }
.lv1 .tt { width: 131px; }
.cbulb { position: absolute; left: 212px; width: 10px; height: 14px; }
.clock { position: absolute; left: 231px; width: 14px; height: 12px; }
.cprint { position: absolute; left: 250px; width: 14px; height: 12px; }
.cbox { position: absolute; left: 267px; width: 16px; height: 16px; border: 1px solid #222; box-sizing: border-box; }
.cbox.white { background: #fff; }
.cbox.green { background: #008d4a; }
.cbox.grey { background: #aaa; }
.cbox.m { border: 0; width: 13px; height: 13px; left: 269px; }
.vscroll { flex: 1; background: #f4f4f4; display: flex; flex-direction: column; align-items: center; padding-top: 8px; }
.vscroll .thumb { width: 100%; height: 122px; margin-top: 186px; background: #d8d8d8; }
.vscroll .chev.d { margin-top: 2px; }

.vtabs { width: 20px; margin: 4px 0 0 0; background: #a0a0a0; flex: none; display: flex; flex-direction: column; align-items: center; color: #fff; height: 407px; }
.vtabs b { font-size: 10px; margin-top: 5px; line-height: 14px; }
.vtabs b.s2 { margin-top: 7px; }
.mini { width: 10px; height: 9px; background: #fff; margin-top: 9px; }
.vt { writing-mode: vertical-rl; color: #333; line-height: 20px; padding: 0; margin-top: 8px; height: 38px; white-space: nowrap; background: #a0a0a0; }
.vt:nth-of-type(2) { margin-top: 13px; }
.vt.act { background: #f0f0f0; width: 20px; height: 46px; text-align: center; border: 1px solid #ccc; box-sizing: border-box; margin-top: 6px; }
.sma { margin-left: 9px; width: 109px; flex: none; border-left: 2px solid #333; box-sizing: content-box; overflow: hidden; }
.smahead { height: 21px; background: #a9a9a9; font: 700 14px/21px "Liberation Sans", sans-serif; display: flex; align-items: center; border-bottom: 2px solid #fff; }
.smagrip { width: 0; height: 14px; border-left: 3px dotted #333; margin: 0 6px 0 2px; }
.smalist { padding-top: 3px; }
.smarow { height: 38px; display: flex; align-items: center; white-space: nowrap; font-size: 12px; }
.smaic { width: 40px; flex: none; display: flex; justify-content: center; }
.smat { display: block; }

.explorer { position: absolute; left: 1041px; top: 411px; width: 709px; height: 447px; background: #f0f0f0; border-left: 1px solid #222; box-sizing: border-box; display: flex; flex-direction: column; }
.xhead { height: 15px; margin: 3px 9px 0 7px; background: #b7b7b7; border: 1px solid #999; display: flex; align-items: center; justify-content: space-between; padding-left: 270px; color: #333; }
.xhead span { padding-left: 25px; }
.xhead b { margin-right: 5px; font-size: 10px; }
.xbody { height: 360px; margin-top: 7px; display: flex; }
.xtree { margin-left: 6px; width: 258px; background: #fff; border: 1px solid #888; border-top: 0; box-sizing: border-box; display: flex; justify-content: space-between; align-items: flex-end; }
.xrows { padding-bottom: 0; width: 240px; }
.xrow { height: 18px; display: flex; align-items: center; padding-left: 44px; white-space: nowrap; }
.xrow.x1 { padding-left: 63px; }
.xrow .chev { margin-right: 12px; margin-left: -16px; }
.xf { width: 16px; height: 14px; margin-right: 2px; }
.xscroll { width: 15px; height: 18px; background: #f0f0f0; display: flex; justify-content: center; align-items: center; }
.xgrid { position: relative; margin-left: 11px; width: 420px; background: #fff; border-left: 1px solid #aaa; box-sizing: border-box; display: flex; overflow: hidden; }
.xgrid::before { content: ""; position: absolute; left: 72px; top: 2px; height: 62px; border-left: 1px dotted #2a6db5; }
.cells { width: 406px; display: grid; grid-template-columns: repeat(4, 84px); grid-auto-rows: 94px; padding: 9px 0 0 0; box-sizing: border-box; flex: none; margin-left: 0; }
.cell { display: flex; flex-direction: column; align-items: center; line-height: 13px; font-size: 11.500px; white-space: nowrap; color: #222; }
.sign { width: 50px; height: 50px; margin-bottom: 10px; }
.nosign { height: 50px; margin-bottom: 10px; }
.gscroll { width: 14px; background: #f4f4f4; display: flex; flex-direction: column; align-items: center; padding-top: 9px; margin-left: 0; }
.gthumb { width: 100%; height: 302px; margin-top: 3px; background: #c9c9c9; }
.gscroll .chev.d { margin-top: 28px; }
.xsearch { height: 22px; margin-top: 2px; display: flex; align-items: center; padding-left: 11px; }
.xb { width: 19px; height: 19px; background: #ddd; border: 1px solid #aaa; box-sizing: border-box; margin-right: 4px; text-align: center; }
.ab { color: #1a8ae0; font-weight: 700; line-height: 17px; }
.xl { margin: 0; width: 36px; }
.xinp { width: 551px; height: 22px; background: #fff; border: 1px solid #777; box-sizing: border-box; }
.btn { background: #dcdcdc; border: 1px solid #adadad; box-sizing: border-box; display: flex; align-items: center; justify-content: center; white-space: nowrap; }
.czysc { margin-left: 4px; width: 37px; height: 21px; }
.xfoot { display: flex; justify-content: flex-end; padding: 3px 11px 0 0; }
.wstaw { width: 78px; height: 22px; }

.status { height: 33px; background: linear-gradient(#5c5e60, #3b3c3d 30%, #333 90%, #ccc 94%); display: flex; align-items: center; color: #eee; flex: none; font-size: 11.500px; position: relative; box-sizing: border-box; border-top: 1px solid #fff; }
.exec { margin-left: 4px; width: 822px; flex: none; }
.coords { width: 196px; flex: none; }
.sicons { display: flex; align-items: center; }
.sti { width: 24px; height: 24px; margin-right: 6.100px; display: flex; align-items: center; justify-content: center; box-sizing: border-box; }
.sti.on { background: #888; border: 1px solid #fff; }
.sti.tx { font-size: 12px; width: 20px; margin-right: 3px; }
.stx { width: 38px; margin-right: 4px; font-size: 12px; }
.stx.dim { color: #999; margin-right: 5px; }

.dlg { position: absolute; background: #f0f0f0; box-sizing: border-box; font-size: 11.500px; color: #111; }
.one { left: 717px; top: 191px; width: 461px; height: 551px; z-index: 5; box-shadow: 0 1px 5px #0008; }
.two { left: 1061px; top: 524px; width: 327px; height: 327px; z-index: 6; border: 1px solid #777; box-shadow: 1px 3px 8px #0007; display: flex; flex-direction: column; }
.dtitle { height: 31px; background: #b4b4b4; display: flex; align-items: center; justify-content: space-between; padding: 0 10px 0 9px; font-size: 12.500px; }
.dx { font-size: 16px; color: #111; }
.dbody { padding: 3px 4px 0 5px; }
.sect { height: 16px; background: #c8c8c8; border: 1px solid #999; box-sizing: border-box; display: flex; align-items: center; justify-content: center; position: relative; color: #333; }
.sect .chev { position: absolute; left: 7px; top: 3px; border-color: #555; }
.sect.s2 { margin-top: 9px; }
.frow { display: flex; align-items: center; }
.frow label { width: 72px; padding-left: 18px; box-sizing: content-box; }
.r1 { height: 20px; margin-top: 6px; }
.r2 { height: 22px; margin-top: 2px; }
.r3 { height: 22px; margin-top: 3px; }
.inp { display: flex; align-items: center; background: #fff; border: 1px solid #777; box-sizing: border-box; height: 100%; padding: 0 3px; white-space: nowrap; }
.num { justify-content: flex-end; }
.dis { background: #f0f0f0; border: 2px solid #d6d6d6; color: #777; width: 55px; }
.grey { background: #e6e6e6; border: 1px solid #c4c4c4; }
.light { background: #f2f2f2; border: 1px solid #c8c8c8; }
.w250 { width: 250px; }
.inp em { flex: 1; margin-top: -3px; }
.gbtn { width: 16px; height: 18px; background: #e8f0f8; border: 1px solid #888; box-sizing: border-box; display: flex; align-items: flex-end; justify-content: center; padding-bottom: 2px; }
.gbtn .dd { border-width: 3px 3px 0; }
.plusb { margin-left: 3px; width: 21px; height: 20px; background: #e0e0e0; border: 1px solid #aaa; box-sizing: border-box; display: flex; align-items: center; justify-content: center; }
.look { margin-top: 4px; display: flex; align-items: flex-start; height: 150px; }
.fold { width: 18px; height: 23px; margin: 1px 0 0 -1px; background: #d8e8f4; border: 1px solid #0a64a8; box-sizing: border-box; display: flex; align-items: center; justify-content: center; }
.prev { position: relative; width: 200px; height: 150px; background: #fff; border-top: 1px solid #999; border-left: 1px solid #999; box-sizing: border-box; margin-left: 1px; }
.prevsign { position: absolute; left: 44px; top: 18px; width: 110px; height: 112px; }
.axis { position: absolute; left: 8px; bottom: -3px; overflow: visible; }
.pisaki { margin: 1px 0 0 71px; width: 162px; height: 20px; background: #e0e4e4; border: 1px solid #aaa; box-sizing: border-box; display: flex; align-items: center; justify-content: center; position: relative; }
.pisaki .dd { position: absolute; right: 5px; top: 6px; }
.prow { margin-top: 9px; display: flex; gap: 5px; }
.pp { width: 336px; }
.wi { width: 111px; }
.wi .dd { position: absolute; right: 9px; top: 4px; }
.legend { margin: 0 0 0 18px; width: 428px; height: 16px; display: flex; align-items: center; color: #999; }
.legend::before, .legend::after { content: ""; flex: 1; height: 1px; background: #aaa; }
.legend span { padding: 0 2px; }
.l1 { margin-top: 2px; }
.l2 { margin-top: 5px; }
.lw { width: 139px !important; }
.symrow { margin-top: 7px; display: flex; align-items: flex-start; }
.symcol { width: 232px; flex: none; }
.f1, .f2 { height: 20px; }
.f2 { margin-top: 5px; }
.w53 { width: 53px; }
.w57 { width: 57px; }
.unit { margin-left: 4px; }
.bracket { width: 6px; height: 23px; margin-top: 11px; border: 1px solid #888; border-left: 0; box-sizing: border-box; }
.lockb { margin: 13px 0 0 8px; width: 14px; height: 17px; background: #dbe8f2; border: 1px solid #0a64a8; box-sizing: border-box; display: flex; align-items: center; justify-content: center; }
.kat { margin: 3px 0 0 25px; }
.f3 { height: 20px; margin-top: 6px; }
.f4 { height: 22px; margin-top: 7px; }
.f5 { height: 20px; margin-top: 6px; }
.up { margin-top: -13px; }
.combo { width: 75px; height: 100%; border: 1px solid #777; background: #fff; box-sizing: border-box; display: flex; align-items: center; justify-content: space-between; padding: 0 3px; }
.combo.grey { background: #d8d8d8; border-color: #b0b0b0; }
.cwhite { width: 56px; height: 14px; background: #fff; }
.styl { width: 36px; height: 1px; background: #111; position: relative; margin-left: 5px; }
.styl i { position: absolute; right: 0; top: -3px; width: 9px; height: 7px; border-radius: 50%; background: #111; }
.vchev { width: 5px; height: 5px; border-right: 1px solid #555; border-bottom: 1px solid #555; transform: rotate(45deg); margin-right: 4px; }
.dfoot { margin-top: 9px; border-top: 1px solid #a8a8a8; padding-top: 8px; display: flex; padding-left: 113px; margin-left: 4px; }
.dfoot .btn { height: 23px; }
.z { width: 99px; }
.za { width: 16px; margin-left: 2px; }
.und { width: 38px; margin-left: 8px; color: #aaa; background: #d0d0d0; font-size: 17px; }
.okb { width: 80px; margin-left: 8px; border: 2px solid #0a78d7; background: #e4e4e4; }
.d2head { height: 34px; border-bottom: 1px solid #aaa; margin: 0 5px; display: flex; align-items: center; padding-bottom: 0; box-sizing: border-box; }
.n1 { width: 129px; }
.n2 { width: 135px; }
.ibtn { width: 21px; height: 21px; background: #e0e0e0; border: 1px solid #b8b8b8; box-sizing: border-box; display: flex; align-items: center; justify-content: center; margin-right: 7px; flex: none; }
.ibtn:last-child { margin-right: 0; }
.dotted { outline: 1px dotted #222; outline-offset: -2px; }
.d2row { margin: 6px 5px 0; height: 19px; display: flex; align-items: center; position: relative; }
.d2row.first { margin-top: 7px; }
.cellk { width: 129px; height: 19px; background: #e8e8e8; border: 1px solid #777; border-right-width: 2px; box-sizing: border-box; line-height: 17px; padding-left: 2px; }
.cellv { width: 129px; height: 19px; background: #fff; border: 1px solid #777; border-left: 0; box-sizing: border-box; line-height: 17px; padding: 0 2px; margin-right: 6px; }
.cellv.num { width: 52px; text-align: right; margin-right: 5px; }
.zl { width: 79px; }
.d2foot { margin-top: auto; height: 29px; border-top: 1px solid #aaa; display: flex; justify-content: flex-end; align-items: center; padding-right: 3px; }
.zam { width: 58px; height: 20px; margin: 0; }
</style>

<style>
html, body { margin: 0; padding: 0; background: #555; }
</style>
